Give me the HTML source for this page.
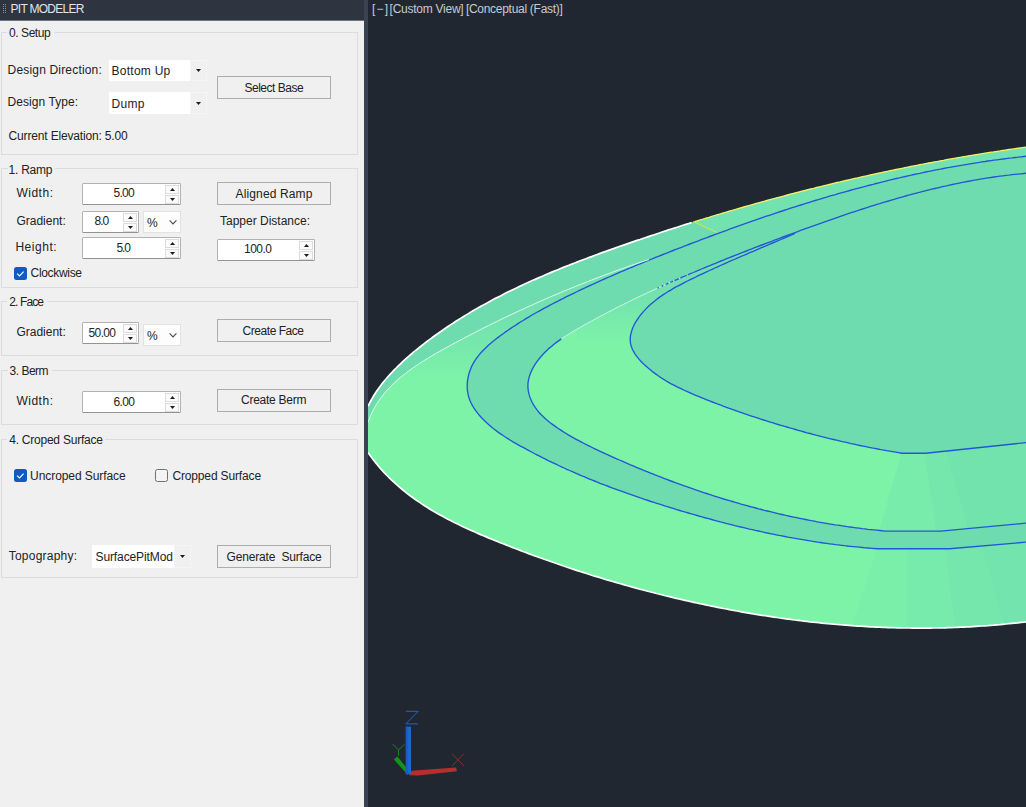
<!DOCTYPE html><html><head><meta charset="utf-8"><title>PIT MODELER</title><style>

html,body{margin:0;padding:0}
body{width:1026px;height:807px;overflow:hidden;background:#f0f0f0;position:relative;font-family:"Liberation Sans",sans-serif;font-size:12px;color:#222}
.t{position:absolute;white-space:pre;line-height:14px;height:14px;font-size:12px}
.abs{position:absolute;box-sizing:border-box}
.title{left:0;top:0;width:364px;height:21px;background:#2e3440;border-bottom:1px solid #6f737b}
.divider{left:364px;top:0;width:4px;height:807px;background:#3b4252}
.view{left:368px;top:0;width:658px;height:807px;background:#212730}
.grp{border:1px solid #dcdcdc;left:1px;width:357px}
.lbl{background:#f0f0f0}
.btn{border:1px solid #adadad;background:#f0f0f0;left:217px;width:114px}
.combo{background:#fff}
.cbtn{background:#f0f0f0;border:1px dotted #fafafa}
.spin{background:#fff;border:1px solid #b2b2b2;border-bottom-color:#929292;border-radius:1.5px}
.sbtn{background:#fafafa;border:1px solid #dcdcdc}
.pc{background:#fdfdfd;border:1px solid #e2e2e2}
.chk{width:13px;height:13px;border-radius:2.5px}

</style></head><body>
<div class="abs view"></div>
<svg width="1026" height="807" viewBox="0 0 1026 807" style="position:absolute;left:0;top:0">
<defs>
<clipPath id="vp"><rect x="368" y="0" width="658" height="807"/></clipPath>
<clipPath id="body"><path d="M368.0 406.3 L369.3 403.6 L370.7 401.0 L372.2 398.4 L373.7 395.8 L375.3 393.3 L376.9 390.8 L378.6 388.4 L380.4 386.0 L382.2 383.6 L384.1 381.3 L386.0 379.0 L387.9 376.7 L389.9 374.5 L392.0 372.3 L394.0 370.1 L396.2 368.0 L398.3 365.9 L400.5 363.8 L402.7 361.7 L404.9 359.7 L407.2 357.7 L409.5 355.7 L411.8 353.7 L414.1 351.7 L416.4 349.8 L418.8 347.9 L421.2 346.0 L423.6 344.1 L426.0 342.2 L428.4 340.4 L430.9 338.6 L433.3 336.8 L435.8 335.0 L438.3 333.2 L440.8 331.5 L443.3 329.7 L445.8 328.0 L448.3 326.3 L450.8 324.6 L453.4 323.0 L455.9 321.3 L458.4 319.7 L461.0 318.1 L463.6 316.5 L466.2 314.9 L468.7 313.4 L471.3 311.8 L473.9 310.3 L476.6 308.8 L479.2 307.3 L481.8 305.8 L484.4 304.4 L487.1 302.9 L489.7 301.5 L492.4 300.0 L495.0 298.6 L497.7 297.2 L500.4 295.9 L503.1 294.5 L505.7 293.1 L508.4 291.8 L511.1 290.5 L513.8 289.2 L516.5 287.9 L519.3 286.6 L522.0 285.3 L524.7 284.0 L527.4 282.8 L530.2 281.5 L532.9 280.3 L535.7 279.1 L538.4 277.9 L541.2 276.7 L544.0 275.5 L546.7 274.3 L549.5 273.1 L552.3 271.9 L555.1 270.8 L557.9 269.7 L560.6 268.5 L563.4 267.4 L566.2 266.3 L569.0 265.2 L571.8 264.1 L574.7 263.0 L577.5 261.9 L580.3 260.8 L583.1 259.7 L585.9 258.7 L588.7 257.6 L591.6 256.6 L594.4 255.5 L597.2 254.5 L600.1 253.4 L602.9 252.4 L605.8 251.4 L608.6 250.4 L611.4 249.4 L614.3 248.4 L617.1 247.3 L620.0 246.3 L622.8 245.4 L625.7 244.4 L628.5 243.4 L631.4 242.4 L634.2 241.4 L637.1 240.4 L640.0 239.5 L642.8 238.5 L645.7 237.5 L648.5 236.6 L651.4 235.6 L654.3 234.7 L657.1 233.7 L660.0 232.8 L662.9 231.8 L665.8 230.9 L668.6 229.9 L671.5 229.0 L674.4 228.1 L677.2 227.2 L680.1 226.2 L683.0 225.3 L685.9 224.4 L688.8 223.5 L691.6 222.6 L694.5 221.7 L697.4 220.8 L700.3 219.9 L703.2 219.0 L706.1 218.1 L709.0 217.3 L711.8 216.4 L714.7 215.5 L717.6 214.6 L720.5 213.8 L723.4 212.9 L726.3 212.1 L729.2 211.2 L732.1 210.4 L735.0 209.5 L737.9 208.7 L740.8 207.8 L743.7 207.0 L746.6 206.2 L749.5 205.4 L752.4 204.5 L755.3 203.7 L758.3 202.9 L761.2 202.1 L764.1 201.3 L767.0 200.5 L769.9 199.7 L772.8 198.9 L775.7 198.1 L778.6 197.3 L781.6 196.6 L784.5 195.8 L787.4 195.0 L790.3 194.2 L793.2 193.5 L796.2 192.7 L799.1 192.0 L802.0 191.2 L804.9 190.5 L807.9 189.7 L810.8 189.0 L813.7 188.3 L816.7 187.5 L819.6 186.8 L822.5 186.1 L825.5 185.4 L828.4 184.7 L831.3 184.0 L834.3 183.2 L837.2 182.5 L840.1 181.9 L843.1 181.2 L846.0 180.5 L849.0 179.8 L851.9 179.1 L854.8 178.4 L857.8 177.8 L860.7 177.1 L863.7 176.4 L866.6 175.8 L869.6 175.1 L872.5 174.5 L875.5 173.8 L878.4 173.2 L881.4 172.6 L884.3 171.9 L887.3 171.3 L890.2 170.7 L893.2 170.1 L896.1 169.5 L899.1 168.9 L902.0 168.3 L905.0 167.7 L908.0 167.1 L910.9 166.5 L913.9 165.9 L916.9 165.3 L919.8 164.7 L922.8 164.2 L925.7 163.6 L928.7 163.0 L931.7 162.5 L934.6 161.9 L937.6 161.4 L940.6 160.8 L943.5 160.3 L946.5 159.7 L949.5 159.2 L952.5 158.7 L955.4 158.2 L958.4 157.6 L961.4 157.1 L964.4 156.6 L967.3 156.1 L970.3 155.6 L973.3 155.1 L976.3 154.6 L979.2 154.1 L982.2 153.7 L985.2 153.2 L988.2 152.7 L991.2 152.2 L994.1 151.8 L997.1 151.3 L1000.1 150.9 L1003.1 150.4 L1006.1 150.0 L1009.1 149.5 L1012.1 149.1 L1015.0 148.7 L1018.0 148.2 L1021.0 147.8 L1024.0 147.4 L1027.0 147.0 L1027.0 621.7 L1024.0 622.1 L1021.0 622.4 L1018.0 622.8 L1014.9 623.1 L1011.9 623.4 L1008.9 623.7 L1005.9 624.0 L1002.9 624.3 L999.8 624.6 L996.8 624.8 L993.8 625.1 L990.8 625.3 L987.8 625.6 L984.8 625.8 L981.7 626.0 L978.7 626.2 L975.7 626.4 L972.7 626.6 L969.7 626.8 L966.6 626.9 L963.6 627.1 L960.6 627.2 L957.6 627.3 L954.6 627.5 L951.5 627.6 L948.5 627.7 L945.5 627.8 L942.5 627.8 L939.5 627.9 L936.4 628.0 L933.4 628.0 L930.4 628.1 L927.4 628.1 L924.4 628.1 L921.3 628.1 L918.3 628.1 L915.3 628.1 L912.3 628.1 L909.3 628.0 L906.2 628.0 L903.2 628.0 L900.2 627.9 L897.2 627.8 L894.2 627.7 L891.2 627.7 L888.2 627.6 L885.1 627.4 L882.1 627.3 L879.1 627.2 L876.1 627.1 L873.1 626.9 L870.1 626.8 L867.1 626.6 L864.0 626.4 L861.0 626.2 L858.0 626.1 L855.0 625.9 L852.0 625.6 L849.0 625.4 L846.0 625.2 L843.0 625.0 L840.0 624.7 L837.0 624.5 L834.0 624.2 L831.0 623.9 L828.0 623.6 L825.0 623.4 L821.9 623.1 L818.9 622.7 L815.9 622.4 L812.9 622.1 L809.9 621.8 L807.0 621.4 L804.0 621.1 L801.0 620.7 L798.0 620.3 L795.0 620.0 L792.0 619.6 L789.0 619.2 L786.0 618.8 L783.0 618.4 L780.0 618.0 L777.0 617.5 L774.0 617.1 L771.1 616.6 L768.1 616.2 L765.1 615.7 L762.1 615.3 L759.1 614.8 L756.1 614.3 L753.2 613.8 L750.2 613.3 L747.2 612.8 L744.2 612.3 L741.3 611.8 L738.3 611.2 L735.3 610.7 L732.3 610.1 L729.4 609.6 L726.4 609.0 L723.4 608.5 L720.5 607.9 L717.5 607.3 L714.6 606.7 L711.6 606.1 L708.6 605.5 L705.7 604.9 L702.7 604.2 L699.8 603.6 L696.8 603.0 L693.9 602.3 L690.9 601.7 L688.0 601.0 L685.0 600.3 L682.1 599.7 L679.1 599.0 L676.2 598.3 L673.3 597.6 L670.3 596.9 L667.4 596.2 L664.5 595.5 L661.5 594.7 L658.6 594.0 L655.7 593.3 L652.7 592.5 L649.8 591.8 L646.9 591.0 L644.0 590.2 L641.0 589.5 L638.1 588.7 L635.2 587.9 L632.3 587.1 L629.4 586.3 L626.5 585.5 L623.6 584.6 L620.6 583.8 L617.7 583.0 L614.8 582.1 L611.9 581.3 L609.0 580.4 L606.1 579.6 L603.2 578.7 L600.3 577.8 L597.5 576.9 L594.6 576.1 L591.7 575.2 L588.8 574.2 L585.9 573.3 L583.0 572.4 L580.1 571.5 L577.3 570.6 L574.4 569.6 L571.5 568.7 L568.6 567.7 L565.8 566.7 L562.9 565.8 L560.0 564.8 L557.2 563.8 L554.3 562.8 L551.4 561.8 L548.6 560.8 L545.7 559.8 L542.9 558.8 L540.0 557.8 L537.2 556.7 L534.3 555.7 L531.5 554.6 L528.6 553.6 L525.8 552.5 L523.0 551.5 L520.1 550.4 L517.3 549.3 L514.5 548.2 L511.6 547.1 L508.8 546.0 L506.0 544.9 L503.2 543.8 L500.3 542.7 L497.5 541.5 L494.7 540.4 L491.9 539.2 L489.1 538.1 L486.3 536.9 L483.5 535.7 L480.7 534.6 L477.9 533.4 L475.1 532.1 L472.4 530.9 L469.6 529.7 L466.9 528.4 L464.1 527.2 L461.4 525.9 L458.7 524.6 L456.0 523.2 L453.3 521.9 L450.6 520.5 L447.9 519.2 L445.2 517.8 L442.6 516.3 L440.0 514.9 L437.4 513.4 L434.8 511.9 L432.2 510.4 L429.6 508.9 L427.1 507.3 L424.6 505.7 L422.1 504.1 L419.6 502.4 L417.2 500.8 L414.7 499.1 L412.3 497.3 L409.9 495.6 L407.6 493.8 L405.2 491.9 L402.9 490.0 L400.6 488.1 L398.3 486.2 L396.1 484.2 L393.9 482.2 L391.7 480.2 L389.6 478.1 L387.5 476.0 L385.4 473.8 L383.3 471.6 L381.3 469.4 L379.3 467.1 L377.3 464.8 L375.4 462.4 L373.5 460.0 L371.6 457.5 L369.8 455.0 L368.0 452.5 Z"/></clipPath>
<linearGradient id="gu" gradientUnits="userSpaceOnUse" x1="0" y1="380" x2="0" y2="318"><stop offset="0" stop-color="#73e3ae" stop-opacity="0"/><stop offset="0.5" stop-color="#73e3ae" stop-opacity="0.6"/><stop offset="1" stop-color="#72e1af" stop-opacity="1"/></linearGradient>
<linearGradient id="gv" gradientUnits="userSpaceOnUse" x1="0" y1="345" x2="0" y2="292"><stop offset="0" stop-color="#73e3ae" stop-opacity="0"/><stop offset="1" stop-color="#72e1af" stop-opacity="1"/></linearGradient>
</defs>
<g clip-path="url(#vp)">
<path d="M368.0 406.3 L369.3 403.6 L370.7 401.0 L372.2 398.4 L373.7 395.8 L375.3 393.3 L376.9 390.8 L378.6 388.4 L380.4 386.0 L382.2 383.6 L384.1 381.3 L386.0 379.0 L387.9 376.7 L389.9 374.5 L392.0 372.3 L394.0 370.1 L396.2 368.0 L398.3 365.9 L400.5 363.8 L402.7 361.7 L404.9 359.7 L407.2 357.7 L409.5 355.7 L411.8 353.7 L414.1 351.7 L416.4 349.8 L418.8 347.9 L421.2 346.0 L423.6 344.1 L426.0 342.2 L428.4 340.4 L430.9 338.6 L433.3 336.8 L435.8 335.0 L438.3 333.2 L440.8 331.5 L443.3 329.7 L445.8 328.0 L448.3 326.3 L450.8 324.6 L453.4 323.0 L455.9 321.3 L458.4 319.7 L461.0 318.1 L463.6 316.5 L466.2 314.9 L468.7 313.4 L471.3 311.8 L473.9 310.3 L476.6 308.8 L479.2 307.3 L481.8 305.8 L484.4 304.4 L487.1 302.9 L489.7 301.5 L492.4 300.0 L495.0 298.6 L497.7 297.2 L500.4 295.9 L503.1 294.5 L505.7 293.1 L508.4 291.8 L511.1 290.5 L513.8 289.2 L516.5 287.9 L519.3 286.6 L522.0 285.3 L524.7 284.0 L527.4 282.8 L530.2 281.5 L532.9 280.3 L535.7 279.1 L538.4 277.9 L541.2 276.7 L544.0 275.5 L546.7 274.3 L549.5 273.1 L552.3 271.9 L555.1 270.8 L557.9 269.7 L560.6 268.5 L563.4 267.4 L566.2 266.3 L569.0 265.2 L571.8 264.1 L574.7 263.0 L577.5 261.9 L580.3 260.8 L583.1 259.7 L585.9 258.7 L588.7 257.6 L591.6 256.6 L594.4 255.5 L597.2 254.5 L600.1 253.4 L602.9 252.4 L605.8 251.4 L608.6 250.4 L611.4 249.4 L614.3 248.4 L617.1 247.3 L620.0 246.3 L622.8 245.4 L625.7 244.4 L628.5 243.4 L631.4 242.4 L634.2 241.4 L637.1 240.4 L640.0 239.5 L642.8 238.5 L645.7 237.5 L648.5 236.6 L651.4 235.6 L654.3 234.7 L657.1 233.7 L660.0 232.8 L662.9 231.8 L665.8 230.9 L668.6 229.9 L671.5 229.0 L674.4 228.1 L677.2 227.2 L680.1 226.2 L683.0 225.3 L685.9 224.4 L688.8 223.5 L691.6 222.6 L694.5 221.7 L697.4 220.8 L700.3 219.9 L703.2 219.0 L706.1 218.1 L709.0 217.3 L711.8 216.4 L714.7 215.5 L717.6 214.6 L720.5 213.8 L723.4 212.9 L726.3 212.1 L729.2 211.2 L732.1 210.4 L735.0 209.5 L737.9 208.7 L740.8 207.8 L743.7 207.0 L746.6 206.2 L749.5 205.4 L752.4 204.5 L755.3 203.7 L758.3 202.9 L761.2 202.1 L764.1 201.3 L767.0 200.5 L769.9 199.7 L772.8 198.9 L775.7 198.1 L778.6 197.3 L781.6 196.6 L784.5 195.8 L787.4 195.0 L790.3 194.2 L793.2 193.5 L796.2 192.7 L799.1 192.0 L802.0 191.2 L804.9 190.5 L807.9 189.7 L810.8 189.0 L813.7 188.3 L816.7 187.5 L819.6 186.8 L822.5 186.1 L825.5 185.4 L828.4 184.7 L831.3 184.0 L834.3 183.2 L837.2 182.5 L840.1 181.9 L843.1 181.2 L846.0 180.5 L849.0 179.8 L851.9 179.1 L854.8 178.4 L857.8 177.8 L860.7 177.1 L863.7 176.4 L866.6 175.8 L869.6 175.1 L872.5 174.5 L875.5 173.8 L878.4 173.2 L881.4 172.6 L884.3 171.9 L887.3 171.3 L890.2 170.7 L893.2 170.1 L896.1 169.5 L899.1 168.9 L902.0 168.3 L905.0 167.7 L908.0 167.1 L910.9 166.5 L913.9 165.9 L916.9 165.3 L919.8 164.7 L922.8 164.2 L925.7 163.6 L928.7 163.0 L931.7 162.5 L934.6 161.9 L937.6 161.4 L940.6 160.8 L943.5 160.3 L946.5 159.7 L949.5 159.2 L952.5 158.7 L955.4 158.2 L958.4 157.6 L961.4 157.1 L964.4 156.6 L967.3 156.1 L970.3 155.6 L973.3 155.1 L976.3 154.6 L979.2 154.1 L982.2 153.7 L985.2 153.2 L988.2 152.7 L991.2 152.2 L994.1 151.8 L997.1 151.3 L1000.1 150.9 L1003.1 150.4 L1006.1 150.0 L1009.1 149.5 L1012.1 149.1 L1015.0 148.7 L1018.0 148.2 L1021.0 147.8 L1024.0 147.4 L1027.0 147.0 L1027.0 621.7 L1024.0 622.1 L1021.0 622.4 L1018.0 622.8 L1014.9 623.1 L1011.9 623.4 L1008.9 623.7 L1005.9 624.0 L1002.9 624.3 L999.8 624.6 L996.8 624.8 L993.8 625.1 L990.8 625.3 L987.8 625.6 L984.8 625.8 L981.7 626.0 L978.7 626.2 L975.7 626.4 L972.7 626.6 L969.7 626.8 L966.6 626.9 L963.6 627.1 L960.6 627.2 L957.6 627.3 L954.6 627.5 L951.5 627.6 L948.5 627.7 L945.5 627.8 L942.5 627.8 L939.5 627.9 L936.4 628.0 L933.4 628.0 L930.4 628.1 L927.4 628.1 L924.4 628.1 L921.3 628.1 L918.3 628.1 L915.3 628.1 L912.3 628.1 L909.3 628.0 L906.2 628.0 L903.2 628.0 L900.2 627.9 L897.2 627.8 L894.2 627.7 L891.2 627.7 L888.2 627.6 L885.1 627.4 L882.1 627.3 L879.1 627.2 L876.1 627.1 L873.1 626.9 L870.1 626.8 L867.1 626.6 L864.0 626.4 L861.0 626.2 L858.0 626.1 L855.0 625.9 L852.0 625.6 L849.0 625.4 L846.0 625.2 L843.0 625.0 L840.0 624.7 L837.0 624.5 L834.0 624.2 L831.0 623.9 L828.0 623.6 L825.0 623.4 L821.9 623.1 L818.9 622.7 L815.9 622.4 L812.9 622.1 L809.9 621.8 L807.0 621.4 L804.0 621.1 L801.0 620.7 L798.0 620.3 L795.0 620.0 L792.0 619.6 L789.0 619.2 L786.0 618.8 L783.0 618.4 L780.0 618.0 L777.0 617.5 L774.0 617.1 L771.1 616.6 L768.1 616.2 L765.1 615.7 L762.1 615.3 L759.1 614.8 L756.1 614.3 L753.2 613.8 L750.2 613.3 L747.2 612.8 L744.2 612.3 L741.3 611.8 L738.3 611.2 L735.3 610.7 L732.3 610.1 L729.4 609.6 L726.4 609.0 L723.4 608.5 L720.5 607.9 L717.5 607.3 L714.6 606.7 L711.6 606.1 L708.6 605.5 L705.7 604.9 L702.7 604.2 L699.8 603.6 L696.8 603.0 L693.9 602.3 L690.9 601.7 L688.0 601.0 L685.0 600.3 L682.1 599.7 L679.1 599.0 L676.2 598.3 L673.3 597.6 L670.3 596.9 L667.4 596.2 L664.5 595.5 L661.5 594.7 L658.6 594.0 L655.7 593.3 L652.7 592.5 L649.8 591.8 L646.9 591.0 L644.0 590.2 L641.0 589.5 L638.1 588.7 L635.2 587.9 L632.3 587.1 L629.4 586.3 L626.5 585.5 L623.6 584.6 L620.6 583.8 L617.7 583.0 L614.8 582.1 L611.9 581.3 L609.0 580.4 L606.1 579.6 L603.2 578.7 L600.3 577.8 L597.5 576.9 L594.6 576.1 L591.7 575.2 L588.8 574.2 L585.9 573.3 L583.0 572.4 L580.1 571.5 L577.3 570.6 L574.4 569.6 L571.5 568.7 L568.6 567.7 L565.8 566.7 L562.9 565.8 L560.0 564.8 L557.2 563.8 L554.3 562.8 L551.4 561.8 L548.6 560.8 L545.7 559.8 L542.9 558.8 L540.0 557.8 L537.2 556.7 L534.3 555.7 L531.5 554.6 L528.6 553.6 L525.8 552.5 L523.0 551.5 L520.1 550.4 L517.3 549.3 L514.5 548.2 L511.6 547.1 L508.8 546.0 L506.0 544.9 L503.2 543.8 L500.3 542.7 L497.5 541.5 L494.7 540.4 L491.9 539.2 L489.1 538.1 L486.3 536.9 L483.5 535.7 L480.7 534.6 L477.9 533.4 L475.1 532.1 L472.4 530.9 L469.6 529.7 L466.9 528.4 L464.1 527.2 L461.4 525.9 L458.7 524.6 L456.0 523.2 L453.3 521.9 L450.6 520.5 L447.9 519.2 L445.2 517.8 L442.6 516.3 L440.0 514.9 L437.4 513.4 L434.8 511.9 L432.2 510.4 L429.6 508.9 L427.1 507.3 L424.6 505.7 L422.1 504.1 L419.6 502.4 L417.2 500.8 L414.7 499.1 L412.3 497.3 L409.9 495.6 L407.6 493.8 L405.2 491.9 L402.9 490.0 L400.6 488.1 L398.3 486.2 L396.1 484.2 L393.9 482.2 L391.7 480.2 L389.6 478.1 L387.5 476.0 L385.4 473.8 L383.3 471.6 L381.3 469.4 L379.3 467.1 L377.3 464.8 L375.4 462.4 L373.5 460.0 L371.6 457.5 L369.8 455.0 L368.0 452.5 Z" fill="#7df3a8"/>
<g clip-path="url(#body)">
<path d="M905.3 440 L922.0 440 L936.8 536 L877.6 536 Z" fill="#78ecab"/>
<path d="M922.0 440 L942.3 440 L969.4 536 L936.8 536 Z" fill="#75e7ad"/>
<path d="M942.3 440 L1030 440 L1030 536 L969.4 536 Z" fill="#73e3ae"/>
<path d="M880.4 538 L907.0 538 L907.0 632 L850.4 632 Z" fill="#7aefaa"/>
<path d="M907.0 538 L943.2 538 L955.2 632 L907.0 632 Z" fill="#77ebab"/>
<path d="M943.2 538 L978.9 538 L1005.9 632 L955.2 632 Z" fill="#75e7ad"/>
<path d="M978.9 538 L1030 538 L1030 632 L1005.9 632 Z" fill="#73e4ae"/>
</g>
<path d="M368.0 422.5 L369.0 419.5 L370.2 416.6 L371.4 413.8 L372.7 411.0 L374.1 408.4 L375.6 405.7 L377.2 403.2 L378.8 400.7 L380.5 398.2 L382.3 395.9 L384.2 393.6 L386.1 391.3 L388.1 389.1 L390.2 386.9 L392.3 384.8 L394.5 382.7 L396.7 380.7 L398.9 378.7 L401.2 376.8 L403.6 374.9 L406.0 373.1 L408.4 371.2 L410.8 369.4 L413.3 367.7 L415.8 365.9 L418.4 364.2 L420.9 362.6 L423.5 360.9 L426.1 359.3 L428.7 357.7 L431.4 356.1 L434.0 354.5 L436.7 353.0 L439.4 351.5 L442.1 350.0 L444.8 348.5 L447.5 347.0 L450.2 345.5 L452.9 344.0 L455.6 342.6 L458.4 341.1 L461.1 339.7 L463.8 338.2 L466.5 336.8 L469.3 335.4 L472.0 334.0 L474.7 332.6 L477.4 331.2 L480.2 329.8 L482.9 328.4 L485.6 327.0 L488.4 325.7 L491.1 324.3 L493.9 323.0 L496.6 321.6 L499.3 320.3 L502.1 318.9 L504.8 317.6 L507.6 316.3 L510.3 315.0 L513.1 313.7 L515.9 312.4 L518.6 311.1 L521.4 309.8 L524.2 308.6 L526.9 307.3 L529.7 306.0 L532.5 304.8 L535.2 303.5 L538.0 302.3 L540.8 301.1 L543.6 299.9 L546.4 298.6 L549.2 297.4 L552.0 296.2 L554.8 295.0 L557.6 293.9 L560.4 292.7 L563.2 291.5 L566.0 290.3 L568.8 289.2 L571.6 288.0 L574.4 286.9 L577.2 285.7 L580.1 284.6 L582.9 283.5 L585.7 282.4 L588.6 281.3 L591.4 280.2 L594.2 279.1 L597.1 278.0 L599.9 276.9 L602.8 275.8 L605.6 274.7 L608.5 273.7 L611.4 272.6 L614.2 271.6 L617.1 270.5 L620.0 269.5 L622.9 268.5 L625.8 267.4 L628.7 266.4 L631.5 265.4 L634.4 264.4 L637.3 263.4 L640.3 262.4 L643.2 261.4 L646.1 260.5 L649.0 259.5 L650.6 259.5 L647.8 260.6 L645.1 261.7 L642.3 262.9 L639.5 264.0 L636.7 265.2 L633.9 266.4 L631.1 267.5 L628.4 268.7 L625.6 269.9 L622.8 271.0 L620.0 272.2 L617.3 273.4 L614.5 274.6 L611.8 275.8 L609.0 277.0 L606.3 278.2 L603.5 279.4 L600.8 280.7 L598.0 281.9 L595.3 283.1 L592.6 284.4 L589.8 285.6 L587.1 286.9 L584.4 288.2 L581.7 289.4 L579.0 290.7 L576.3 292.0 L573.6 293.3 L570.9 294.6 L568.2 295.9 L565.5 297.2 L562.9 298.6 L560.2 299.9 L557.5 301.3 L554.9 302.6 L552.2 304.0 L549.6 305.4 L546.9 306.8 L544.3 308.2 L541.7 309.6 L539.1 311.1 L536.4 312.5 L533.8 314.0 L531.2 315.5 L528.6 317.1 L526.0 318.6 L523.5 320.2 L520.9 321.8 L518.3 323.4 L515.8 325.1 L513.2 326.7 L510.7 328.4 L508.1 330.2 L505.6 331.9 L503.1 333.7 L500.6 335.5 L498.1 337.4 L495.6 339.3 L493.1 341.2 L490.8 343.2 L488.4 345.3 L486.2 347.4 L484.0 349.5 L481.9 351.7 L479.9 353.9 L478.0 356.3 L476.2 358.7 L474.6 361.1 L473.1 363.7 L471.7 366.3 L470.6 369.0 L469.6 371.8 L468.7 374.6 L468.1 377.5 L467.6 380.4 L467.3 383.3 L467.2 386.2 L368 440 Z" fill="url(#gu)"/>
<path d="M368.0 406.3 L369.3 403.6 L370.7 401.0 L372.2 398.4 L373.7 395.8 L375.3 393.3 L376.9 390.8 L378.6 388.4 L380.4 386.0 L382.2 383.6 L384.1 381.3 L386.0 379.0 L387.9 376.7 L389.9 374.5 L392.0 372.3 L394.0 370.1 L396.2 368.0 L398.3 365.9 L400.5 363.8 L402.7 361.7 L404.9 359.7 L407.2 357.7 L409.5 355.7 L411.8 353.7 L414.1 351.7 L416.4 349.8 L418.8 347.9 L421.2 346.0 L423.6 344.1 L426.0 342.2 L428.4 340.4 L430.9 338.6 L433.3 336.8 L435.8 335.0 L438.3 333.2 L440.8 331.5 L443.3 329.7 L445.8 328.0 L448.3 326.3 L450.8 324.6 L453.4 323.0 L455.9 321.3 L458.4 319.7 L461.0 318.1 L463.6 316.5 L466.2 314.9 L468.7 313.4 L471.3 311.8 L473.9 310.3 L476.6 308.8 L479.2 307.3 L481.8 305.8 L484.4 304.4 L487.1 302.9 L489.7 301.5 L492.4 300.0 L495.0 298.6 L497.7 297.2 L500.4 295.9 L503.1 294.5 L505.7 293.1 L508.4 291.8 L511.1 290.5 L513.8 289.2 L516.5 287.9 L519.3 286.6 L522.0 285.3 L524.7 284.0 L527.4 282.8 L530.2 281.5 L532.9 280.3 L535.7 279.1 L538.4 277.9 L541.2 276.7 L544.0 275.5 L546.7 274.3 L549.5 273.1 L552.3 271.9 L555.1 270.8 L557.9 269.7 L560.6 268.5 L563.4 267.4 L566.2 266.3 L569.0 265.2 L571.8 264.1 L574.7 263.0 L577.5 261.9 L580.3 260.8 L583.1 259.7 L585.9 258.7 L588.7 257.6 L591.6 256.6 L594.4 255.5 L597.2 254.5 L600.1 253.4 L602.9 252.4 L605.8 251.4 L608.6 250.4 L611.4 249.4 L614.3 248.4 L617.1 247.3 L620.0 246.3 L622.8 245.4 L625.7 244.4 L628.5 243.4 L631.4 242.4 L634.2 241.4 L637.1 240.4 L640.0 239.5 L642.8 238.5 L645.7 237.5 L648.5 236.6 L651.4 235.6 L649.0 259.5 L646.1 260.5 L643.2 261.4 L640.3 262.4 L637.3 263.4 L634.4 264.4 L631.5 265.4 L628.7 266.4 L625.8 267.4 L622.9 268.5 L620.0 269.5 L617.1 270.5 L614.2 271.6 L611.4 272.6 L608.5 273.7 L605.6 274.7 L602.8 275.8 L599.9 276.9 L597.1 278.0 L594.2 279.1 L591.4 280.2 L588.6 281.3 L585.7 282.4 L582.9 283.5 L580.1 284.6 L577.2 285.7 L574.4 286.9 L571.6 288.0 L568.8 289.2 L566.0 290.3 L563.2 291.5 L560.4 292.7 L557.6 293.9 L554.8 295.0 L552.0 296.2 L549.2 297.4 L546.4 298.6 L543.6 299.9 L540.8 301.1 L538.0 302.3 L535.2 303.5 L532.5 304.8 L529.7 306.0 L526.9 307.3 L524.2 308.6 L521.4 309.8 L518.6 311.1 L515.9 312.4 L513.1 313.7 L510.3 315.0 L507.6 316.3 L504.8 317.6 L502.1 318.9 L499.3 320.3 L496.6 321.6 L493.9 323.0 L491.1 324.3 L488.4 325.7 L485.6 327.0 L482.9 328.4 L480.2 329.8 L477.4 331.2 L474.7 332.6 L472.0 334.0 L469.3 335.4 L466.5 336.8 L463.8 338.2 L461.1 339.7 L458.4 341.1 L455.6 342.6 L452.9 344.0 L450.2 345.5 L447.5 347.0 L444.8 348.5 L442.1 350.0 L439.4 351.5 L436.7 353.0 L434.0 354.5 L431.4 356.1 L428.7 357.7 L426.1 359.3 L423.5 360.9 L420.9 362.6 L418.4 364.2 L415.8 365.9 L413.3 367.7 L410.8 369.4 L408.4 371.2 L406.0 373.1 L403.6 374.9 L401.2 376.8 L398.9 378.7 L396.7 380.7 L394.5 382.7 L392.3 384.8 L390.2 386.9 L388.1 389.1 L386.1 391.3 L384.2 393.6 L382.3 395.9 L380.5 398.2 L378.8 400.7 L377.2 403.2 L375.6 405.7 L374.1 408.4 L372.7 411.0 L371.4 413.8 L370.2 416.6 L369.0 419.5 L368.0 422.5 Z" fill="#6fdcb0"/>
<path d="M645.7 237.5 L648.5 236.6 L651.4 235.6 L654.3 234.7 L657.1 233.7 L660.0 232.8 L662.9 231.8 L665.8 230.9 L668.6 229.9 L671.5 229.0 L674.4 228.1 L677.2 227.2 L680.1 226.2 L683.0 225.3 L685.9 224.4 L688.8 223.5 L691.6 222.6 L694.5 221.7 L697.4 220.8 L700.3 219.9 L703.2 219.0 L706.1 218.1 L709.0 217.3 L711.8 216.4 L714.7 215.5 L717.6 214.6 L720.5 213.8 L723.4 212.9 L726.3 212.1 L729.2 211.2 L732.1 210.4 L735.0 209.5 L737.9 208.7 L740.8 207.8 L743.7 207.0 L746.6 206.2 L749.5 205.4 L752.4 204.5 L755.3 203.7 L758.3 202.9 L761.2 202.1 L764.1 201.3 L767.0 200.5 L769.9 199.7 L772.8 198.9 L775.7 198.1 L778.6 197.3 L781.6 196.6 L784.5 195.8 L787.4 195.0 L790.3 194.2 L793.2 193.5 L796.2 192.7 L799.1 192.0 L802.0 191.2 L804.9 190.5 L807.9 189.7 L810.8 189.0 L813.7 188.3 L816.7 187.5 L819.6 186.8 L822.5 186.1 L825.5 185.4 L828.4 184.7 L831.3 184.0 L834.3 183.2 L837.2 182.5 L840.1 181.9 L843.1 181.2 L846.0 180.5 L849.0 179.8 L851.9 179.1 L854.8 178.4 L857.8 177.8 L860.7 177.1 L863.7 176.4 L866.6 175.8 L869.6 175.1 L872.5 174.5 L875.5 173.8 L878.4 173.2 L881.4 172.6 L884.3 171.9 L887.3 171.3 L890.2 170.7 L893.2 170.1 L896.1 169.5 L899.1 168.9 L902.0 168.3 L905.0 167.7 L908.0 167.1 L910.9 166.5 L913.9 165.9 L916.9 165.3 L919.8 164.7 L922.8 164.2 L925.7 163.6 L928.7 163.0 L931.7 162.5 L934.6 161.9 L937.6 161.4 L940.6 160.8 L943.5 160.3 L946.5 159.7 L949.5 159.2 L952.5 158.7 L955.4 158.2 L958.4 157.6 L961.4 157.1 L964.4 156.6 L967.3 156.1 L970.3 155.6 L973.3 155.1 L976.3 154.6 L979.2 154.1 L982.2 153.7 L985.2 153.2 L988.2 152.7 L991.2 152.2 L994.1 151.8 L997.1 151.3 L1000.1 150.9 L1003.1 150.4 L1006.1 150.0 L1009.1 149.5 L1012.1 149.1 L1015.0 148.7 L1018.0 148.2 L1021.0 147.8 L1024.0 147.4 L1027.0 147.0 L1027.0 156.2 L1024.0 156.5 L1021.0 156.8 L1018.0 157.2 L1015.0 157.5 L1012.0 157.9 L1009.0 158.2 L1006.0 158.6 L1003.0 159.0 L1000.0 159.4 L997.0 159.8 L994.0 160.2 L991.0 160.6 L988.0 161.0 L985.0 161.5 L982.0 161.9 L979.1 162.4 L976.1 162.8 L973.1 163.3 L970.1 163.8 L967.2 164.3 L964.2 164.8 L961.2 165.3 L958.3 165.8 L955.3 166.3 L952.3 166.8 L949.4 167.4 L946.4 167.9 L943.5 168.5 L940.5 169.1 L937.6 169.6 L934.6 170.2 L931.7 170.8 L928.7 171.4 L925.8 172.0 L922.8 172.6 L919.9 173.3 L916.9 173.9 L914.0 174.5 L911.1 175.2 L908.1 175.8 L905.2 176.5 L902.3 177.2 L899.3 177.9 L896.4 178.5 L893.5 179.2 L890.6 179.9 L887.6 180.6 L884.7 181.4 L881.8 182.1 L878.9 182.8 L876.0 183.5 L873.1 184.3 L870.2 185.0 L867.2 185.8 L864.3 186.6 L861.4 187.3 L858.5 188.1 L855.6 188.9 L852.7 189.7 L849.8 190.5 L846.9 191.3 L844.0 192.1 L841.1 192.9 L838.3 193.7 L835.4 194.6 L832.5 195.4 L829.6 196.2 L826.7 197.1 L823.8 197.9 L820.9 198.8 L818.1 199.7 L815.2 200.5 L812.3 201.4 L809.4 202.3 L806.5 203.2 L803.7 204.1 L800.8 205.0 L797.9 205.9 L795.1 206.8 L792.2 207.7 L789.3 208.7 L786.5 209.6 L783.6 210.5 L780.7 211.5 L777.9 212.4 L775.0 213.4 L772.2 214.3 L769.3 215.3 L766.5 216.2 L763.6 217.2 L760.8 218.2 L757.9 219.2 L755.1 220.2 L752.2 221.1 L749.4 222.1 L746.5 223.1 L743.7 224.1 L740.9 225.1 L738.0 226.2 L735.2 227.2 L732.3 228.2 L729.5 229.2 L726.7 230.3 L723.8 231.3 L721.0 232.3 L718.2 233.4 L715.3 234.4 L712.5 235.5 L709.7 236.5 L706.9 237.6 L704.0 238.6 L701.2 239.7 L698.4 240.8 L695.6 241.8 L692.8 242.9 L689.9 244.0 L687.1 245.1 L684.3 246.2 L681.5 247.3 L678.7 248.3 L675.9 249.4 L673.1 250.5 L670.3 251.6 L667.4 252.8 L664.6 253.9 L661.8 255.0 L659.0 256.1 L656.2 257.2 L653.4 258.3 L650.6 259.5 L647.8 260.6 L645.1 261.7 Z" fill="#6fdcb0"/>
<path d="M694.5 221.7 L697.4 220.8 L700.3 219.9 L703.2 219.0 L706.1 218.1 L709.0 217.3 L711.8 216.4 L714.7 215.5 L717.6 214.6 L720.5 213.8 L723.4 212.9 L726.3 212.1 L729.2 211.2 L732.1 210.4 L735.0 209.5 L737.9 208.7 L740.8 207.8 L743.7 207.0 L746.6 206.2 L749.5 205.4 L752.4 204.5 L755.3 203.7 L758.3 202.9 L761.2 202.1 L764.1 201.3 L767.0 200.5 L769.9 199.7 L772.8 198.9 L775.7 198.1 L778.6 197.3 L781.6 196.6 L784.5 195.8 L787.4 195.0 L790.3 194.2 L793.2 193.5 L796.2 192.7 L799.1 192.0 L802.0 191.2 L804.9 190.5 L807.9 189.7 L810.8 189.0 L813.7 188.3 L816.7 187.5 L819.6 186.8 L822.5 186.1 L825.5 185.4 L828.4 184.7 L831.3 184.0 L834.3 183.2 L837.2 182.5 L840.1 181.9 L843.1 181.2 L846.0 180.5 L849.0 179.8 L851.9 179.1 L854.8 178.4 L857.8 177.8 L860.7 177.1 L863.7 176.4 L866.6 175.8 L869.6 175.1 L872.5 174.5 L875.5 173.8 L878.4 173.2 L881.4 172.6 L884.3 171.9 L887.3 171.3 L890.2 170.7 L893.2 170.1 L896.1 169.5 L899.1 168.9 L902.0 168.3 L905.0 167.7 L908.0 167.1 L910.9 166.5 L913.9 165.9 L916.9 165.3 L919.8 164.7 L922.8 164.2 L925.7 163.6 L928.7 163.0 L931.7 162.5 L934.6 161.9 L937.6 161.4 L940.6 160.8 L943.5 160.3 L946.5 159.7 L949.5 159.2 L952.5 158.7 L955.4 158.2 L958.4 157.6 L961.4 157.1 L964.4 156.6 L967.3 156.1 L970.3 155.6 L973.3 155.1 L976.3 154.6 L979.2 154.1 L982.2 153.7 L985.2 153.2 L988.2 152.7 L991.2 152.2 L994.1 151.8 L997.1 151.3 L1000.1 150.9 L1003.1 150.4 L1006.1 150.0 L1009.1 149.5 L1012.1 149.1 L1015.0 148.7 L1018.0 148.2 L1021.0 147.8 L1024.0 147.4 L1027.0 147.0 L1027.0 156.2 L1024.0 156.5 L1021.0 156.8 L1018.0 157.2 L1015.0 157.5 L1012.0 157.9 L1009.0 158.2 L1006.0 158.6 L1003.0 159.0 L1000.0 159.4 L997.0 159.8 L994.0 160.2 L991.0 160.6 L988.0 161.0 L985.0 161.5 L982.0 161.9 L979.1 162.4 L976.1 162.8 L973.1 163.3 L970.1 163.8 L967.2 164.3 L964.2 164.8 L961.2 165.3 L958.3 165.8 L955.3 166.3 L952.3 166.8 L949.4 167.4 L946.4 167.9 L943.5 168.5 L940.5 169.1 L937.6 169.6 L934.6 170.2 L931.7 170.8 L928.7 171.4 L925.8 172.0 L922.8 172.6 L919.9 173.3 L916.9 173.9 L914.0 174.5 L911.1 175.2 L908.1 175.8 L905.2 176.5 L902.3 177.2 L899.3 177.9 L896.4 178.5 L893.5 179.2 L890.6 179.9 L887.6 180.6 L884.7 181.4 L881.8 182.1 L878.9 182.8 L876.0 183.5 L873.1 184.3 L870.2 185.0 L867.2 185.8 L864.3 186.6 L861.4 187.3 L858.5 188.1 L855.6 188.9 L852.7 189.7 L849.8 190.5 L846.9 191.3 L844.0 192.1 L841.1 192.9 L838.3 193.7 L835.4 194.6 L832.5 195.4 L829.6 196.2 L826.7 197.1 L823.8 197.9 L820.9 198.8 L818.1 199.7 L815.2 200.5 L812.3 201.4 L809.4 202.3 L806.5 203.2 L803.7 204.1 L800.8 205.0 L797.9 205.9 L795.1 206.8 L792.2 207.7 L789.3 208.7 L786.5 209.6 L783.6 210.5 L780.7 211.5 L777.9 212.4 L775.0 213.4 L772.2 214.3 L769.3 215.3 L766.5 216.2 L763.6 217.2 L760.8 218.2 L757.9 219.2 L755.1 220.2 L752.2 221.1 L749.4 222.1 L746.5 223.1 L743.7 224.1 L740.9 225.1 L738.0 226.2 L735.2 227.2 L732.3 228.2 L729.5 229.2 L726.7 230.3 L723.8 231.3 L721.0 232.3 L718.2 233.4 Z" fill="#73e2b1"/>
<path d="M1027.0 156.2 L1024.0 156.5 L1021.0 156.8 L1018.0 157.2 L1015.0 157.5 L1012.0 157.9 L1009.0 158.2 L1006.0 158.6 L1003.0 159.0 L1000.0 159.4 L997.0 159.8 L994.0 160.2 L991.0 160.6 L988.0 161.0 L985.0 161.5 L982.0 161.9 L979.1 162.4 L976.1 162.8 L973.1 163.3 L970.1 163.8 L967.2 164.3 L964.2 164.8 L961.2 165.3 L958.3 165.8 L955.3 166.3 L952.3 166.8 L949.4 167.4 L946.4 167.9 L943.5 168.5 L940.5 169.1 L937.6 169.6 L934.6 170.2 L931.7 170.8 L928.7 171.4 L925.8 172.0 L922.8 172.6 L919.9 173.3 L916.9 173.9 L914.0 174.5 L911.1 175.2 L908.1 175.8 L905.2 176.5 L902.3 177.2 L899.3 177.9 L896.4 178.5 L893.5 179.2 L890.6 179.9 L887.6 180.6 L884.7 181.4 L881.8 182.1 L878.9 182.8 L876.0 183.5 L873.1 184.3 L870.2 185.0 L867.2 185.8 L864.3 186.6 L861.4 187.3 L858.5 188.1 L855.6 188.9 L852.7 189.7 L849.8 190.5 L846.9 191.3 L844.0 192.1 L841.1 192.9 L838.3 193.7 L835.4 194.6 L832.5 195.4 L829.6 196.2 L826.7 197.1 L823.8 197.9 L820.9 198.8 L818.1 199.7 L815.2 200.5 L812.3 201.4 L809.4 202.3 L806.5 203.2 L803.7 204.1 L800.8 205.0 L797.9 205.9 L795.1 206.8 L792.2 207.7 L789.3 208.7 L786.5 209.6 L783.6 210.5 L780.7 211.5 L777.9 212.4 L775.0 213.4 L772.2 214.3 L769.3 215.3 L766.5 216.2 L763.6 217.2 L760.8 218.2 L757.9 219.2 L755.1 220.2 L752.2 221.1 L749.4 222.1 L746.5 223.1 L743.7 224.1 L740.9 225.1 L738.0 226.2 L735.2 227.2 L732.3 228.2 L729.5 229.2 L726.7 230.3 L723.8 231.3 L721.0 232.3 L718.2 233.4 L715.3 234.4 L712.5 235.5 L709.7 236.5 L706.9 237.6 L704.0 238.6 L701.2 239.7 L698.4 240.8 L695.6 241.8 L692.8 242.9 L689.9 244.0 L687.1 245.1 L684.3 246.2 L681.5 247.3 L678.7 248.3 L675.9 249.4 L673.1 250.5 L670.3 251.6 L667.4 252.8 L664.6 253.9 L661.8 255.0 L659.0 256.1 L656.2 257.2 L653.4 258.3 L650.6 259.5 L647.8 260.6 L645.1 261.7 L642.3 262.9 L639.5 264.0 L636.7 265.2 L633.9 266.4 L631.1 267.5 L628.4 268.7 L625.6 269.9 L622.8 271.0 L620.0 272.2 L617.3 273.4 L614.5 274.6 L611.8 275.8 L609.0 277.0 L606.3 278.2 L603.5 279.4 L600.8 280.7 L598.0 281.9 L595.3 283.1 L592.6 284.4 L589.8 285.6 L587.1 286.9 L584.4 288.2 L581.7 289.4 L579.0 290.7 L576.3 292.0 L573.6 293.3 L570.9 294.6 L568.2 295.9 L565.5 297.2 L562.9 298.6 L560.2 299.9 L557.5 301.3 L554.9 302.6 L552.2 304.0 L549.6 305.4 L546.9 306.8 L544.3 308.2 L541.7 309.6 L539.1 311.1 L536.4 312.5 L533.8 314.0 L531.2 315.5 L528.6 317.1 L526.0 318.6 L523.5 320.2 L520.9 321.8 L518.3 323.4 L515.8 325.1 L513.2 326.7 L510.7 328.4 L508.1 330.2 L505.6 331.9 L503.1 333.7 L500.6 335.5 L498.1 337.4 L495.6 339.3 L493.1 341.2 L490.8 343.2 L488.4 345.3 L486.2 347.4 L484.0 349.5 L481.9 351.7 L479.9 353.9 L478.0 356.3 L476.2 358.7 L474.6 361.1 L473.1 363.7 L471.7 366.3 L470.6 369.0 L469.6 371.8 L468.7 374.6 L468.1 377.5 L467.6 380.4 L467.3 383.3 L467.2 386.2 L467.3 389.2 L467.7 392.1 L468.2 394.9 L469.0 397.8 L470.0 400.5 L471.2 403.3 L472.6 405.9 L474.2 408.5 L475.9 410.9 L477.8 413.4 L479.8 415.7 L481.8 418.0 L483.9 420.1 L486.1 422.3 L488.3 424.3 L490.6 426.3 L492.9 428.2 L495.3 430.0 L497.7 431.9 L500.2 433.6 L502.7 435.3 L505.2 437.0 L507.8 438.6 L510.4 440.2 L513.0 441.8 L515.6 443.3 L518.2 444.8 L520.9 446.3 L523.6 447.7 L526.2 449.2 L528.9 450.6 L531.6 452.0 L534.2 453.5 L536.9 454.8 L539.6 456.2 L542.3 457.6 L545.0 458.9 L547.7 460.3 L550.4 461.6 L553.2 462.9 L555.9 464.2 L558.6 465.5 L561.4 466.8 L564.1 468.0 L566.8 469.3 L569.6 470.5 L572.3 471.7 L575.1 472.9 L577.8 474.1 L580.6 475.3 L583.4 476.5 L586.2 477.6 L588.9 478.8 L591.7 479.9 L594.5 481.0 L597.3 482.1 L600.1 483.3 L602.9 484.3 L605.7 485.4 L608.5 486.5 L611.3 487.6 L614.1 488.6 L616.9 489.7 L619.8 490.7 L622.6 491.7 L625.4 492.7 L628.2 493.7 L631.1 494.7 L633.9 495.7 L636.8 496.7 L639.6 497.7 L642.4 498.6 L645.3 499.6 L648.1 500.5 L651.0 501.5 L653.9 502.4 L656.7 503.3 L659.6 504.2 L662.5 505.2 L665.3 506.1 L668.2 506.9 L671.1 507.8 L673.9 508.7 L676.8 509.6 L679.7 510.5 L682.6 511.3 L685.5 512.2 L688.4 513.0 L691.3 513.9 L694.2 514.7 L697.1 515.5 L700.0 516.3 L702.9 517.1 L705.8 518.0 L708.7 518.7 L711.6 519.5 L714.5 520.3 L717.4 521.1 L720.3 521.9 L723.2 522.6 L726.1 523.4 L729.1 524.1 L732.0 524.8 L734.9 525.6 L737.8 526.3 L740.8 527.0 L743.7 527.7 L746.6 528.4 L749.5 529.1 L752.5 529.7 L755.4 530.4 L758.4 531.0 L761.3 531.7 L764.2 532.3 L767.2 533.0 L770.1 533.6 L773.1 534.2 L776.0 534.8 L779.0 535.4 L781.9 535.9 L784.9 536.5 L787.9 537.1 L790.8 537.6 L793.8 538.2 L796.7 538.7 L799.7 539.2 L802.7 539.7 L805.6 540.2 L808.6 540.7 L811.6 541.2 L814.5 541.6 L817.5 542.1 L820.5 542.5 L823.5 543.0 L826.5 543.4 L829.4 543.8 L832.4 544.2 L835.4 544.6 L838.4 544.9 L841.4 545.3 L844.4 545.7 L847.3 546.0 L850.3 546.3 L853.3 546.6 L856.3 546.9 L859.3 547.2 L862.3 547.5 L865.3 547.8 L868.3 548.0 L871.3 548.3 L874.3 548.5 L877.3 548.7 L949.6 548.7 L1027.0 542.1 L1027.0 523.1 L940.9 531.1 L886.0 531.1 L883.0 530.8 L880.0 530.5 L877.0 530.2 L874.0 529.9 L871.0 529.6 L868.0 529.3 L865.0 528.9 L862.0 528.6 L859.0 528.2 L856.0 527.8 L853.0 527.4 L850.0 527.0 L847.1 526.6 L844.1 526.1 L841.1 525.7 L838.1 525.2 L835.1 524.8 L832.2 524.3 L829.2 523.8 L826.2 523.3 L823.3 522.8 L820.3 522.3 L817.3 521.8 L814.4 521.2 L811.4 520.7 L808.5 520.1 L805.5 519.5 L802.6 518.9 L799.6 518.3 L796.7 517.7 L793.7 517.1 L790.8 516.5 L787.8 515.8 L784.9 515.2 L782.0 514.5 L779.0 513.8 L776.1 513.1 L773.2 512.4 L770.3 511.7 L767.3 511.0 L764.4 510.3 L761.5 509.5 L758.6 508.8 L755.7 508.0 L752.8 507.2 L749.8 506.5 L746.9 505.7 L744.0 504.9 L741.1 504.1 L738.2 503.2 L735.4 502.4 L732.5 501.5 L729.6 500.7 L726.7 499.8 L723.8 499.0 L720.9 498.1 L718.0 497.2 L715.2 496.3 L712.3 495.4 L709.4 494.4 L706.6 493.5 L703.7 492.6 L700.8 491.6 L698.0 490.6 L695.1 489.7 L692.3 488.7 L689.4 487.7 L686.6 486.7 L683.7 485.7 L680.9 484.6 L678.1 483.6 L675.2 482.6 L672.4 481.5 L669.6 480.5 L666.8 479.4 L663.9 478.3 L661.1 477.2 L658.3 476.2 L655.5 475.0 L652.7 473.9 L649.9 472.8 L647.1 471.7 L644.3 470.6 L641.5 469.4 L638.8 468.3 L636.0 467.1 L633.2 465.9 L630.4 464.8 L627.7 463.6 L624.9 462.4 L622.2 461.2 L619.4 460.0 L616.7 458.8 L613.9 457.6 L611.2 456.3 L608.5 455.1 L605.7 453.9 L603.0 452.6 L600.3 451.4 L597.6 450.1 L594.9 448.8 L592.2 447.5 L589.5 446.2 L586.8 444.9 L584.2 443.5 L581.5 442.1 L578.8 440.7 L576.2 439.3 L573.5 437.8 L570.9 436.3 L568.3 434.8 L565.7 433.2 L563.1 431.6 L560.5 429.9 L557.9 428.2 L555.3 426.4 L552.8 424.6 L550.2 422.7 L547.8 420.8 L545.4 418.7 L543.1 416.6 L540.9 414.5 L538.9 412.2 L537.0 409.8 L535.2 407.4 L533.6 404.9 L532.1 402.3 L530.9 399.6 L529.8 396.9 L529.0 394.2 L528.4 391.5 L528.0 388.7 L527.9 385.9 L528.0 383.1 L528.4 380.3 L529.0 377.6 L529.9 374.8 L531.0 372.1 L532.2 369.4 L533.6 366.8 L535.2 364.2 L537.0 361.7 L538.8 359.2 L540.8 356.8 L542.8 354.5 L544.9 352.3 L547.1 350.2 L549.3 348.1 L551.7 346.2 L554.0 344.2 L556.4 342.4 L558.9 340.6 L561.4 338.9 L563.9 337.2 L566.5 335.5 L569.1 333.9 L571.7 332.3 L574.3 330.8 L576.9 329.2 L579.6 327.7 L582.2 326.2 L584.9 324.7 L587.5 323.2 L590.2 321.8 L592.9 320.3 L595.5 318.9 L598.2 317.4 L600.9 316.0 L603.5 314.6 L606.2 313.2 L608.9 311.8 L611.6 310.4 L614.2 309.0 L616.9 307.6 L619.6 306.3 L622.3 304.9 L625.0 303.6 L627.7 302.3 L630.4 301.0 L633.1 299.6 L635.8 298.3 L638.5 297.0 L641.2 295.7 L643.9 294.5 L646.6 293.2 L649.4 291.9 L652.1 290.7 L654.8 289.4 L657.5 288.2 L660.3 286.9 L663.0 285.7 L665.7 284.5 L668.5 283.2 L671.2 282.0 L674.0 280.8 L676.7 279.6 L679.5 278.4 L682.2 277.2 L685.0 276.0 L687.7 274.9 L690.5 273.7 L693.3 272.5 L696.0 271.3 L698.8 270.2 L701.6 269.0 L704.3 267.9 L707.1 266.7 L709.9 265.6 L712.7 264.4 L715.5 263.3 L718.3 262.1 L721.1 261.0 L723.9 259.9 L726.7 258.7 L729.5 257.6 L732.3 256.5 L735.1 255.4 L737.9 254.3 L740.7 253.2 L743.5 252.1 L746.3 251.0 L749.1 249.9 L751.9 248.8 L754.7 247.7 L757.6 246.6 L760.4 245.5 L763.2 244.5 L766.0 243.4 L768.8 242.3 L771.7 241.3 L774.5 240.2 L777.3 239.1 L780.1 238.1 L783.0 237.0 L785.8 236.0 L788.6 234.9 L791.5 233.9 L794.3 232.8 L797.1 231.8 L800.0 230.7 L802.8 229.7 L805.6 228.7 L808.5 227.6 L811.3 226.6 L814.1 225.6 L817.0 224.6 L819.8 223.6 L822.7 222.6 L825.5 221.6 L828.3 220.6 L831.2 219.6 L834.0 218.6 L836.9 217.6 L839.7 216.6 L842.6 215.6 L845.4 214.7 L848.3 213.7 L851.1 212.7 L854.0 211.8 L856.9 210.9 L859.7 209.9 L862.6 209.0 L865.4 208.1 L868.3 207.2 L871.2 206.2 L874.0 205.3 L876.9 204.4 L879.8 203.6 L882.7 202.7 L885.5 201.8 L888.4 201.0 L891.3 200.1 L894.2 199.3 L897.1 198.4 L899.9 197.6 L902.8 196.8 L905.7 196.0 L908.6 195.2 L911.5 194.4 L914.4 193.6 L917.3 192.8 L920.2 192.1 L923.1 191.3 L926.0 190.6 L929.0 189.9 L931.9 189.2 L934.8 188.5 L937.7 187.8 L940.6 187.1 L943.6 186.4 L946.5 185.8 L949.4 185.1 L952.4 184.5 L955.3 183.9 L958.3 183.3 L961.2 182.7 L964.2 182.1 L967.1 181.5 L970.1 181.0 L973.0 180.4 L976.0 179.9 L979.0 179.4 L981.9 178.9 L984.9 178.4 L987.9 177.9 L990.9 177.5 L993.9 177.0 L996.9 176.6 L999.9 176.2 L1002.9 175.8 L1005.9 175.4 L1008.9 175.1 L1011.9 174.7 L1014.9 174.4 L1017.9 174.1 L1020.9 173.8 L1024.0 173.5 L1027.0 173.2 Z" fill="#6fdcb0"/>
<path d="M800.0 230.7 L797.1 231.8 L794.3 232.8 L791.5 233.9 L788.6 234.9 L785.8 236.0 L783.0 237.0 L780.1 238.1 L777.3 239.1 L774.5 240.2 L771.7 241.3 L768.8 242.3 L766.0 243.4 L763.2 244.5 L760.4 245.5 L757.6 246.6 L754.7 247.7 L751.9 248.8 L749.1 249.9 L746.3 251.0 L743.5 252.1 L740.7 253.2 L737.9 254.3 L735.1 255.4 L732.3 256.5 L729.5 257.6 L726.7 258.7 L723.9 259.9 L721.1 261.0 L718.3 262.1 L715.5 263.3 L712.7 264.4 L709.9 265.6 L707.1 266.7 L704.3 267.9 L701.6 269.0 L698.8 270.2 L696.0 271.3 L693.3 272.5 L690.5 273.7 L687.7 274.9 L685.0 276.0 L682.2 277.2 L679.5 278.4 L676.7 279.6 L674.0 280.8 L671.2 282.0 L668.5 283.2 L665.7 284.5 L663.0 285.7 L660.3 286.9 L657.5 288.2 L654.8 289.4 L652.1 290.7 L649.4 291.9 L646.6 293.2 L643.9 294.5 L641.2 295.7 L638.5 297.0 L635.8 298.3 L633.1 299.6 L630.4 301.0 L627.7 302.3 L625.0 303.6 L622.3 304.9 L619.6 306.3 L616.9 307.6 L614.2 309.0 L611.6 310.4 L608.9 311.8 L606.2 313.2 L603.5 314.6 L600.9 316.0 L598.2 317.4 L595.5 318.9 L592.9 320.3 L590.2 321.8 L587.5 323.2 L584.9 324.7 L582.2 326.2 L579.6 327.7 L576.9 329.2 L575 345 L630.6 343.9 L630.3 341.2 L630.2 338.4 L630.5 335.7 L631.1 333.0 L631.9 330.2 L632.9 327.5 L634.2 324.8 L635.6 322.2 L637.3 319.6 L639.0 317.1 L640.8 314.7 L642.7 312.4 L644.8 310.1 L646.8 307.9 L649.0 305.8 L651.3 303.8 L653.6 301.9 L655.9 300.0 L658.3 298.1 L660.8 296.4 L663.3 294.6 L665.9 293.0 L668.5 291.3 L671.2 289.8 L673.8 288.2 L676.5 286.7 L679.2 285.3 L682.0 283.8 L684.7 282.4 L687.4 281.0 L690.2 279.7 L692.9 278.3 L695.7 277.0 L698.4 275.7 L701.2 274.4 L703.9 273.1 L706.6 271.8 L709.4 270.5 L712.1 269.3 L714.8 268.0 L717.6 266.8 L720.3 265.5 L723.0 264.3 L725.8 263.1 L728.5 261.9 L731.2 260.7 L734.0 259.5 L736.7 258.3 L739.5 257.1 L742.2 256.0 L744.9 254.8 L747.7 253.6 L750.4 252.4 L753.2 251.3 L755.9 250.1 L758.7 248.9 L761.5 247.7 L764.2 246.6 L767.0 245.4 L769.8 244.2 L772.6 243.0 L775.3 241.9 L778.1 240.7 L780.9 239.5 L783.7 238.3 L786.5 237.1 L789.3 235.9 L792.2 234.6 L795.0 233.4 Z" fill="url(#gv)"/>
<path d="M1027.0 173.2 L1024.0 173.5 L1020.9 173.8 L1017.9 174.1 L1014.9 174.4 L1011.9 174.7 L1008.9 175.1 L1005.9 175.4 L1002.9 175.8 L999.9 176.2 L996.9 176.6 L993.9 177.0 L990.9 177.5 L987.9 177.9 L984.9 178.4 L981.9 178.9 L979.0 179.4 L976.0 179.9 L973.0 180.4 L970.1 181.0 L967.1 181.5 L964.2 182.1 L961.2 182.7 L958.3 183.3 L955.3 183.9 L952.4 184.5 L949.4 185.1 L946.5 185.8 L943.6 186.4 L940.6 187.1 L937.7 187.8 L934.8 188.5 L931.9 189.2 L929.0 189.9 L926.0 190.6 L923.1 191.3 L920.2 192.1 L917.3 192.8 L914.4 193.6 L911.5 194.4 L908.6 195.2 L905.7 196.0 L902.8 196.8 L899.9 197.6 L897.1 198.4 L894.2 199.3 L891.3 200.1 L888.4 201.0 L885.5 201.8 L882.7 202.7 L879.8 203.6 L876.9 204.4 L874.0 205.3 L871.2 206.2 L868.3 207.2 L865.4 208.1 L862.6 209.0 L859.7 209.9 L856.9 210.9 L854.0 211.8 L851.1 212.7 L848.3 213.7 L845.4 214.7 L842.6 215.6 L839.7 216.6 L836.9 217.6 L834.0 218.6 L831.2 219.6 L828.3 220.6 L825.5 221.6 L822.7 222.6 L819.8 223.6 L817.0 224.6 L814.1 225.6 L811.3 226.6 L808.5 227.6 L805.6 228.7 L802.8 229.7 L800.0 230.7 L797.1 231.8 L792.2 234.6 L789.3 235.9 L786.5 237.1 L783.7 238.3 L780.9 239.5 L778.1 240.7 L775.3 241.9 L772.6 243.0 L769.8 244.2 L767.0 245.4 L764.2 246.6 L761.5 247.7 L758.7 248.9 L755.9 250.1 L753.2 251.3 L750.4 252.4 L747.7 253.6 L744.9 254.8 L742.2 256.0 L739.5 257.1 L736.7 258.3 L734.0 259.5 L731.2 260.7 L728.5 261.9 L725.8 263.1 L723.0 264.3 L720.3 265.5 L717.6 266.8 L714.8 268.0 L712.1 269.3 L709.4 270.5 L706.6 271.8 L703.9 273.1 L701.2 274.4 L698.4 275.7 L695.7 277.0 L692.9 278.3 L690.2 279.7 L687.4 281.0 L684.7 282.4 L682.0 283.8 L679.2 285.3 L676.5 286.7 L673.8 288.2 L671.2 289.8 L668.5 291.3 L665.9 293.0 L663.3 294.6 L660.8 296.4 L658.3 298.1 L655.9 300.0 L653.6 301.9 L651.3 303.8 L649.0 305.8 L646.8 307.9 L644.8 310.1 L642.7 312.4 L640.8 314.7 L639.0 317.1 L637.3 319.6 L635.6 322.2 L634.2 324.8 L632.9 327.5 L631.9 330.2 L631.1 333.0 L630.5 335.7 L630.2 338.4 L630.3 341.2 L630.6 343.9 L631.3 346.5 L632.4 349.2 L633.7 351.7 L635.2 354.3 L637.0 356.7 L639.0 359.1 L641.1 361.5 L643.4 363.8 L645.8 366.0 L648.2 368.1 L650.6 370.1 L653.1 372.1 L655.6 373.9 L658.2 375.7 L660.7 377.5 L663.3 379.1 L665.9 380.7 L668.6 382.3 L671.2 383.8 L673.9 385.2 L676.6 386.6 L679.3 387.9 L682.0 389.2 L684.7 390.5 L687.4 391.7 L690.2 392.9 L692.9 394.1 L695.7 395.3 L698.5 396.4 L701.3 397.6 L704.0 398.7 L706.8 399.8 L709.6 400.9 L712.4 402.0 L715.2 403.1 L718.0 404.2 L720.9 405.2 L723.7 406.3 L726.5 407.3 L729.3 408.4 L732.2 409.4 L735.0 410.4 L737.9 411.4 L740.7 412.4 L743.6 413.4 L746.4 414.3 L749.3 415.3 L752.2 416.3 L755.0 417.2 L757.9 418.1 L760.8 419.1 L763.6 420.0 L766.5 420.9 L769.4 421.8 L772.3 422.7 L775.2 423.6 L778.1 424.5 L781.0 425.3 L783.9 426.2 L786.8 427.0 L789.7 427.9 L792.6 428.7 L795.5 429.5 L798.4 430.4 L801.3 431.2 L804.2 432.0 L807.1 432.8 L810.1 433.5 L813.0 434.3 L815.9 435.1 L818.8 435.8 L821.8 436.6 L824.7 437.3 L827.6 438.1 L830.6 438.8 L833.5 439.5 L836.4 440.2 L839.4 440.9 L842.3 441.6 L845.3 442.2 L848.2 442.9 L851.1 443.6 L854.1 444.2 L857.0 444.8 L860.0 445.5 L863.0 446.1 L865.9 446.7 L868.9 447.3 L871.8 447.9 L874.8 448.4 L877.7 449.0 L880.7 449.6 L883.7 450.1 L886.6 450.7 L889.6 451.2 L892.6 451.7 L895.6 452.2 L898.5 452.7 L901.5 453.2 L925.5 453.2 L1027.0 442.5 Z" fill="#6fdcb0"/>
<path d="M1027.0 156.2 L1024.0 156.5 L1021.0 156.8 L1018.0 157.2 L1015.0 157.5 L1012.0 157.9 L1009.0 158.2 L1006.0 158.6 L1003.0 159.0 L1000.0 159.4 L997.0 159.8 L994.0 160.2 L991.0 160.6 L988.0 161.0 L985.0 161.5 L982.0 161.9 L979.1 162.4 L976.1 162.8 L973.1 163.3 L970.1 163.8 L967.2 164.3 L964.2 164.8 L961.2 165.3 L958.3 165.8 L955.3 166.3 L952.3 166.8 L949.4 167.4 L946.4 167.9 L943.5 168.5 L940.5 169.1 L937.6 169.6 L934.6 170.2 L931.7 170.8 L928.7 171.4 L925.8 172.0 L922.8 172.6 L919.9 173.3 L916.9 173.9 L914.0 174.5 L911.1 175.2 L908.1 175.8 L905.2 176.5 L902.3 177.2 L899.3 177.9 L896.4 178.5 L893.5 179.2 L890.6 179.9 L887.6 180.6 L884.7 181.4 L881.8 182.1 L878.9 182.8 L876.0 183.5 L873.1 184.3 L870.2 185.0 L867.2 185.8 L864.3 186.6 L861.4 187.3 L858.5 188.1 L855.6 188.9 L852.7 189.7 L849.8 190.5 L846.9 191.3 L844.0 192.1 L841.1 192.9 L838.3 193.7 L835.4 194.6 L832.5 195.4 L829.6 196.2 L826.7 197.1 L823.8 197.9 L820.9 198.8 L818.1 199.7 L815.2 200.5 L812.3 201.4 L809.4 202.3 L806.5 203.2 L803.7 204.1 L800.8 205.0 L797.9 205.9 L795.1 206.8 L792.2 207.7 L789.3 208.7 L786.5 209.6 L783.6 210.5 L780.7 211.5 L777.9 212.4 L775.0 213.4 L772.2 214.3 L769.3 215.3 L766.5 216.2 L763.6 217.2 L760.8 218.2 L757.9 219.2 L755.1 220.2 L752.2 221.1 L749.4 222.1 L746.5 223.1 L743.7 224.1 L740.9 225.1 L738.0 226.2 L735.2 227.2 L732.3 228.2 L729.5 229.2 L726.7 230.3 L723.8 231.3 L721.0 232.3 L718.2 233.4 L715.3 234.4 L712.5 235.5 L709.7 236.5 L706.9 237.6 L704.0 238.6 L701.2 239.7 L698.4 240.8 L695.6 241.8 L692.8 242.9 L689.9 244.0 L687.1 245.1 L684.3 246.2 L681.5 247.3 L678.7 248.3 L675.9 249.4 L673.1 250.5 L670.3 251.6 L667.4 252.8 L664.6 253.9 L661.8 255.0 L659.0 256.1 L656.2 257.2 L653.4 258.3 L650.6 259.5 L647.8 260.6 L645.1 261.7 L642.3 262.9 L639.5 264.0 L636.7 265.2 L633.9 266.4 L631.1 267.5 L628.4 268.7 L625.6 269.9 L622.8 271.0 L620.0 272.2 L617.3 273.4 L614.5 274.6 L611.8 275.8 L609.0 277.0 L606.3 278.2 L603.5 279.4 L600.8 280.7 L598.0 281.9 L595.3 283.1 L592.6 284.4 L589.8 285.6 L587.1 286.9 L584.4 288.2 L581.7 289.4 L579.0 290.7 L576.3 292.0 L573.6 293.3 L570.9 294.6 L568.2 295.9 L565.5 297.2 L562.9 298.6 L560.2 299.9 L557.5 301.3 L554.9 302.6 L552.2 304.0 L549.6 305.4 L546.9 306.8 L544.3 308.2 L541.7 309.6 L539.1 311.1 L536.4 312.5 L533.8 314.0 L531.2 315.5 L528.6 317.1 L526.0 318.6 L523.5 320.2 L520.9 321.8 L518.3 323.4 L515.8 325.1 L513.2 326.7 L510.7 328.4 L508.1 330.2 L505.6 331.9 L503.1 333.7 L500.6 335.5 L498.1 337.4 L495.6 339.3 L493.1 341.2 L490.8 343.2 L488.4 345.3 L486.2 347.4 L484.0 349.5 L481.9 351.7 L479.9 353.9 L478.0 356.3 L476.2 358.7 L474.6 361.1 L473.1 363.7 L471.7 366.3 L470.6 369.0 L469.6 371.8 L468.7 374.6 L468.1 377.5 L467.6 380.4 L467.3 383.3 L467.2 386.2 L467.3 389.2 L467.7 392.1 L468.2 394.9 L469.0 397.8 L470.0 400.5 L471.2 403.3 L472.6 405.9 L474.2 408.5 L475.9 410.9 L477.8 413.4 L479.8 415.7 L481.8 418.0 L483.9 420.1 L486.1 422.3 L488.3 424.3 L490.6 426.3 L492.9 428.2 L495.3 430.0 L497.7 431.9 L500.2 433.6 L502.7 435.3 L505.2 437.0 L507.8 438.6 L510.4 440.2 L513.0 441.8 L515.6 443.3 L518.2 444.8 L520.9 446.3 L523.6 447.7 L526.2 449.2 L528.9 450.6 L531.6 452.0 L534.2 453.5 L536.9 454.8 L539.6 456.2 L542.3 457.6 L545.0 458.9 L547.7 460.3 L550.4 461.6 L553.2 462.9 L555.9 464.2 L558.6 465.5 L561.4 466.8 L564.1 468.0 L566.8 469.3 L569.6 470.5 L572.3 471.7 L575.1 472.9 L577.8 474.1 L580.6 475.3 L583.4 476.5 L586.2 477.6 L588.9 478.8 L591.7 479.9 L594.5 481.0 L597.3 482.1 L600.1 483.3 L602.9 484.3 L605.7 485.4 L608.5 486.5 L611.3 487.6 L614.1 488.6 L616.9 489.7 L619.8 490.7 L622.6 491.7 L625.4 492.7 L628.2 493.7 L631.1 494.7 L633.9 495.7 L636.8 496.7 L639.6 497.7 L642.4 498.6 L645.3 499.6 L648.1 500.5 L651.0 501.5 L653.9 502.4 L656.7 503.3 L659.6 504.2 L662.5 505.2 L665.3 506.1 L668.2 506.9 L671.1 507.8 L673.9 508.7 L676.8 509.6 L679.7 510.5 L682.6 511.3 L685.5 512.2 L688.4 513.0 L691.3 513.9 L694.2 514.7 L697.1 515.5 L700.0 516.3 L702.9 517.1 L705.8 518.0 L708.7 518.7 L711.6 519.5 L714.5 520.3 L717.4 521.1 L720.3 521.9 L723.2 522.6 L726.1 523.4 L729.1 524.1 L732.0 524.8 L734.9 525.6 L737.8 526.3 L740.8 527.0 L743.7 527.7 L746.6 528.4 L749.5 529.1 L752.5 529.7 L755.4 530.4 L758.4 531.0 L761.3 531.7 L764.2 532.3 L767.2 533.0 L770.1 533.6 L773.1 534.2 L776.0 534.8 L779.0 535.4 L781.9 535.9 L784.9 536.5 L787.9 537.1 L790.8 537.6 L793.8 538.2 L796.7 538.7 L799.7 539.2 L802.7 539.7 L805.6 540.2 L808.6 540.7 L811.6 541.2 L814.5 541.6 L817.5 542.1 L820.5 542.5 L823.5 543.0 L826.5 543.4 L829.4 543.8 L832.4 544.2 L835.4 544.6 L838.4 544.9 L841.4 545.3 L844.4 545.7 L847.3 546.0 L850.3 546.3 L853.3 546.6 L856.3 546.9 L859.3 547.2 L862.3 547.5 L865.3 547.8 L868.3 548.0 L871.3 548.3 L874.3 548.5 L877.3 548.7 L949.6 548.7 L1027.0 542.1" fill="none" stroke="#2356d6" stroke-width="1.35"/>
<path d="M561.4 338.9 L558.9 340.6 L556.4 342.4 L554.0 344.2 L551.7 346.2 L549.3 348.1 L547.1 350.2 L544.9 352.3 L542.8 354.5 L540.8 356.8 L538.8 359.2 L537.0 361.7 L535.2 364.2 L533.6 366.8 L532.2 369.4 L531.0 372.1 L529.9 374.8 L529.0 377.6 L528.4 380.3 L528.0 383.1 L527.9 385.9 L528.0 388.7 L528.4 391.5 L529.0 394.2 L529.8 396.9 L530.9 399.6 L532.1 402.3 L533.6 404.9 L535.2 407.4 L537.0 409.8 L538.9 412.2 L540.9 414.5 L543.1 416.6 L545.4 418.7 L547.8 420.8 L550.2 422.7 L552.8 424.6 L555.3 426.4 L557.9 428.2 L560.5 429.9 L563.1 431.6 L565.7 433.2 L568.3 434.8 L570.9 436.3 L573.5 437.8 L576.2 439.3 L578.8 440.7 L581.5 442.1 L584.2 443.5 L586.8 444.9 L589.5 446.2 L592.2 447.5 L594.9 448.8 L597.6 450.1 L600.3 451.4 L603.0 452.6 L605.7 453.9 L608.5 455.1 L611.2 456.3 L613.9 457.6 L616.7 458.8 L619.4 460.0 L622.2 461.2 L624.9 462.4 L627.7 463.6 L630.4 464.8 L633.2 465.9 L636.0 467.1 L638.8 468.3 L641.5 469.4 L644.3 470.6 L647.1 471.7 L649.9 472.8 L652.7 473.9 L655.5 475.0 L658.3 476.2 L661.1 477.2 L663.9 478.3 L666.8 479.4 L669.6 480.5 L672.4 481.5 L675.2 482.6 L678.1 483.6 L680.9 484.6 L683.7 485.7 L686.6 486.7 L689.4 487.7 L692.3 488.7 L695.1 489.7 L698.0 490.6 L700.8 491.6 L703.7 492.6 L706.6 493.5 L709.4 494.4 L712.3 495.4 L715.2 496.3 L718.0 497.2 L720.9 498.1 L723.8 499.0 L726.7 499.8 L729.6 500.7 L732.5 501.5 L735.4 502.4 L738.2 503.2 L741.1 504.1 L744.0 504.9 L746.9 505.7 L749.8 506.5 L752.8 507.2 L755.7 508.0 L758.6 508.8 L761.5 509.5 L764.4 510.3 L767.3 511.0 L770.3 511.7 L773.2 512.4 L776.1 513.1 L779.0 513.8 L782.0 514.5 L784.9 515.2 L787.8 515.8 L790.8 516.5 L793.7 517.1 L796.7 517.7 L799.6 518.3 L802.6 518.9 L805.5 519.5 L808.5 520.1 L811.4 520.7 L814.4 521.2 L817.3 521.8 L820.3 522.3 L823.3 522.8 L826.2 523.3 L829.2 523.8 L832.2 524.3 L835.1 524.8 L838.1 525.2 L841.1 525.7 L844.1 526.1 L847.1 526.6 L850.0 527.0 L853.0 527.4 L856.0 527.8 L859.0 528.2 L862.0 528.6 L865.0 528.9 L868.0 529.3 L871.0 529.6 L874.0 529.9 L877.0 530.2 L880.0 530.5 L883.0 530.8 L886.0 531.1 L940.9 531.1 L1027.0 523.1" fill="none" stroke="#2356d6" stroke-width="1.35"/>
<path d="M698.8 270.2 L696.0 271.3 L693.3 272.5 L690.5 273.7 L687.7 274.9 L685.0 276.0 L682.2 277.2 L679.5 278.4 L676.7 279.6 L674.0 280.8 L671.2 282.0 L668.5 283.2 L665.7 284.5 L663.0 285.7 L660.3 286.9 L657.5 288.2 L654.8 289.4 L652.1 290.7 L649.4 291.9 L646.6 293.2 L643.9 294.5 L641.2 295.7 L638.5 297.0 L635.8 298.3 L633.1 299.6 L630.4 301.0 L627.7 302.3 L625.0 303.6 L622.3 304.9 L619.6 306.3 L616.9 307.6 L614.2 309.0 L611.6 310.4 L608.9 311.8 L606.2 313.2 L603.5 314.6 L600.9 316.0 L598.2 317.4 L595.5 318.9 L592.9 320.3 L590.2 321.8 L587.5 323.2 L584.9 324.7 L582.2 326.2 L579.6 327.7 L576.9 329.2 L574.3 330.8 L571.7 332.3 L569.1 333.9 L566.5 335.5 L563.9 337.2 L561.4 338.9" fill="none" stroke="#d4f4e8" stroke-width="1"/>
<path d="M657.5 288.2 L660.3 286.9 L663.0 285.7 L665.7 284.5 L668.5 283.2 L671.2 282.0 L674.0 280.8 L676.7 279.6 L679.5 278.4 L682.2 277.2 L685.0 276.0 L687.7 274.9 L690.5 273.7 L693.3 272.5 L696.0 271.3 L698.8 270.2 L701.6 269.0 L704.3 267.9 L707.1 266.7 L709.9 265.6 L712.7 264.4 L715.5 263.3 L718.3 262.1 L721.1 261.0 L723.9 259.9 L726.7 258.7 L729.5 257.6 L732.3 256.5 L735.1 255.4 L737.9 254.3 L740.7 253.2 L743.5 252.1 L746.3 251.0 L749.1 249.9 L751.9 248.8 L754.7 247.7 L757.6 246.6 L760.4 245.5 L763.2 244.5 L766.0 243.4 L768.8 242.3 L771.7 241.3 L774.5 240.2 L777.3 239.1 L780.1 238.1 L783.0 237.0 L785.8 236.0 L788.6 234.9 L791.5 233.9 L794.3 232.8 L797.1 231.8 L800.0 230.7 L802.8 229.7 L805.6 228.7 L808.5 227.6 L811.3 226.6 L814.1 225.6 L817.0 224.6 L819.8 223.6 L822.7 222.6 L825.5 221.6 L828.3 220.6 L831.2 219.6 L834.0 218.6 L836.9 217.6 L839.7 216.6 L842.6 215.6 L845.4 214.7 L848.3 213.7 L851.1 212.7 L854.0 211.8 L856.9 210.9 L859.7 209.9 L862.6 209.0 L865.4 208.1 L868.3 207.2 L871.2 206.2 L874.0 205.3 L876.9 204.4 L879.8 203.6 L882.7 202.7 L885.5 201.8 L888.4 201.0 L891.3 200.1 L894.2 199.3 L897.1 198.4 L899.9 197.6 L902.8 196.8 L905.7 196.0 L908.6 195.2 L911.5 194.4 L914.4 193.6 L917.3 192.8 L920.2 192.1 L923.1 191.3 L926.0 190.6 L929.0 189.9 L931.9 189.2 L934.8 188.5 L937.7 187.8 L940.6 187.1 L943.6 186.4 L946.5 185.8 L949.4 185.1 L952.4 184.5 L955.3 183.9 L958.3 183.3 L961.2 182.7 L964.2 182.1 L967.1 181.5 L970.1 181.0 L973.0 180.4 L976.0 179.9 L979.0 179.4 L981.9 178.9 L984.9 178.4 L987.9 177.9 L990.9 177.5 L993.9 177.0 L996.9 176.6 L999.9 176.2 L1002.9 175.8 L1005.9 175.4 L1008.9 175.1 L1011.9 174.7 L1014.9 174.4 L1017.9 174.1 L1020.9 173.8 L1024.0 173.5 L1027.0 173.2" fill="none" stroke="#2356d6" stroke-width="1.35" stroke-dasharray="1.5 3 2 2.5 3 2 3 1.5 5 1.5 7 1 600"/>
<path d="M795.0 233.4 L792.2 234.6 L789.3 235.9 L786.5 237.1 L783.7 238.3 L780.9 239.5 L778.1 240.7 L775.3 241.9 L772.6 243.0 L769.8 244.2 L767.0 245.4 L764.2 246.6 L761.5 247.7 L758.7 248.9 L755.9 250.1 L753.2 251.3 L750.4 252.4 L747.7 253.6 L744.9 254.8 L742.2 256.0 L739.5 257.1 L736.7 258.3 L734.0 259.5 L731.2 260.7 L728.5 261.9 L725.8 263.1 L723.0 264.3 L720.3 265.5 L717.6 266.8 L714.8 268.0 L712.1 269.3 L709.4 270.5 L706.6 271.8 L703.9 273.1 L701.2 274.4 L698.4 275.7 L695.7 277.0 L692.9 278.3 L690.2 279.7 L687.4 281.0 L684.7 282.4 L682.0 283.8 L679.2 285.3 L676.5 286.7 L673.8 288.2 L671.2 289.8 L668.5 291.3 L665.9 293.0 L663.3 294.6 L660.8 296.4 L658.3 298.1 L655.9 300.0 L653.6 301.9 L651.3 303.8 L649.0 305.8 L646.8 307.9 L644.8 310.1 L642.7 312.4 L640.8 314.7 L639.0 317.1 L637.3 319.6 L635.6 322.2 L634.2 324.8 L632.9 327.5 L631.9 330.2 L631.1 333.0 L630.5 335.7 L630.2 338.4 L630.3 341.2 L630.6 343.9 L631.3 346.5 L632.4 349.2 L633.7 351.7 L635.2 354.3 L637.0 356.7 L639.0 359.1 L641.1 361.5 L643.4 363.8 L645.8 366.0 L648.2 368.1 L650.6 370.1 L653.1 372.1 L655.6 373.9 L658.2 375.7 L660.7 377.5 L663.3 379.1 L665.9 380.7 L668.6 382.3 L671.2 383.8 L673.9 385.2 L676.6 386.6 L679.3 387.9 L682.0 389.2 L684.7 390.5 L687.4 391.7 L690.2 392.9 L692.9 394.1 L695.7 395.3 L698.5 396.4 L701.3 397.6 L704.0 398.7 L706.8 399.8 L709.6 400.9 L712.4 402.0 L715.2 403.1 L718.0 404.2 L720.9 405.2 L723.7 406.3 L726.5 407.3 L729.3 408.4 L732.2 409.4 L735.0 410.4 L737.9 411.4 L740.7 412.4 L743.6 413.4 L746.4 414.3 L749.3 415.3 L752.2 416.3 L755.0 417.2 L757.9 418.1 L760.8 419.1 L763.6 420.0 L766.5 420.9 L769.4 421.8 L772.3 422.7 L775.2 423.6 L778.1 424.5 L781.0 425.3 L783.9 426.2 L786.8 427.0 L789.7 427.9 L792.6 428.7 L795.5 429.5 L798.4 430.4 L801.3 431.2 L804.2 432.0 L807.1 432.8 L810.1 433.5 L813.0 434.3 L815.9 435.1 L818.8 435.8 L821.8 436.6 L824.7 437.3 L827.6 438.1 L830.6 438.8 L833.5 439.5 L836.4 440.2 L839.4 440.9 L842.3 441.6 L845.3 442.2 L848.2 442.9 L851.1 443.6 L854.1 444.2 L857.0 444.8 L860.0 445.5 L863.0 446.1 L865.9 446.7 L868.9 447.3 L871.8 447.9 L874.8 448.4 L877.7 449.0 L880.7 449.6 L883.7 450.1 L886.6 450.7 L889.6 451.2 L892.6 451.7 L895.6 452.2 L898.5 452.7 L901.5 453.2 L925.5 453.2 L1027.0 442.5" fill="none" stroke="#2356d6" stroke-width="1.35"/>
<path d="M368.0 422.5 L369.0 419.5 L370.2 416.6 L371.4 413.8 L372.7 411.0 L374.1 408.4 L375.6 405.7 L377.2 403.2 L378.8 400.7 L380.5 398.2 L382.3 395.9 L384.2 393.6 L386.1 391.3 L388.1 389.1 L390.2 386.9 L392.3 384.8 L394.5 382.7 L396.7 380.7 L398.9 378.7 L401.2 376.8 L403.6 374.9 L406.0 373.1 L408.4 371.2 L410.8 369.4 L413.3 367.7 L415.8 365.9 L418.4 364.2 L420.9 362.6 L423.5 360.9 L426.1 359.3 L428.7 357.7 L431.4 356.1 L434.0 354.5 L436.7 353.0 L439.4 351.5 L442.1 350.0 L444.8 348.5 L447.5 347.0 L450.2 345.5 L452.9 344.0 L455.6 342.6 L458.4 341.1 L461.1 339.7 L463.8 338.2 L466.5 336.8 L469.3 335.4 L472.0 334.0 L474.7 332.6 L477.4 331.2 L480.2 329.8 L482.9 328.4 L485.6 327.0 L488.4 325.7 L491.1 324.3 L493.9 323.0 L496.6 321.6 L499.3 320.3 L502.1 318.9 L504.8 317.6 L507.6 316.3 L510.3 315.0 L513.1 313.7 L515.9 312.4 L518.6 311.1 L521.4 309.8 L524.2 308.6 L526.9 307.3 L529.7 306.0 L532.5 304.8 L535.2 303.5 L538.0 302.3 L540.8 301.1 L543.6 299.9 L546.4 298.6 L549.2 297.4 L552.0 296.2 L554.8 295.0 L557.6 293.9 L560.4 292.7 L563.2 291.5 L566.0 290.3 L568.8 289.2 L571.6 288.0 L574.4 286.9 L577.2 285.7 L580.1 284.6 L582.9 283.5 L585.7 282.4 L588.6 281.3 L591.4 280.2 L594.2 279.1 L597.1 278.0 L599.9 276.9 L602.8 275.8 L605.6 274.7 L608.5 273.7 L611.4 272.6 L614.2 271.6 L617.1 270.5 L620.0 269.5 L622.9 268.5 L625.8 267.4 L628.7 266.4 L631.5 265.4 L634.4 264.4 L637.3 263.4 L640.3 262.4 L643.2 261.4 L646.1 260.5 L649.0 259.5" fill="none" stroke="#e2faee" stroke-width="1"/>
<path d="M368.0 406.3 L369.3 403.6 L370.7 401.0 L372.2 398.4 L373.7 395.8 L375.3 393.3 L376.9 390.8 L378.6 388.4 L380.4 386.0 L382.2 383.6 L384.1 381.3 L386.0 379.0 L387.9 376.7 L389.9 374.5 L392.0 372.3 L394.0 370.1 L396.2 368.0 L398.3 365.9 L400.5 363.8 L402.7 361.7 L404.9 359.7 L407.2 357.7 L409.5 355.7 L411.8 353.7 L414.1 351.7 L416.4 349.8 L418.8 347.9 L421.2 346.0 L423.6 344.1 L426.0 342.2 L428.4 340.4 L430.9 338.6 L433.3 336.8 L435.8 335.0 L438.3 333.2 L440.8 331.5 L443.3 329.7 L445.8 328.0 L448.3 326.3 L450.8 324.6 L453.4 323.0 L455.9 321.3 L458.4 319.7 L461.0 318.1 L463.6 316.5 L466.2 314.9 L468.7 313.4 L471.3 311.8 L473.9 310.3 L476.6 308.8 L479.2 307.3 L481.8 305.8 L484.4 304.4 L487.1 302.9 L489.7 301.5 L492.4 300.0 L495.0 298.6 L497.7 297.2 L500.4 295.9 L503.1 294.5 L505.7 293.1 L508.4 291.8 L511.1 290.5 L513.8 289.2 L516.5 287.9 L519.3 286.6 L522.0 285.3 L524.7 284.0 L527.4 282.8 L530.2 281.5 L532.9 280.3 L535.7 279.1 L538.4 277.9 L541.2 276.7 L544.0 275.5 L546.7 274.3 L549.5 273.1 L552.3 271.9 L555.1 270.8 L557.9 269.7 L560.6 268.5 L563.4 267.4 L566.2 266.3 L569.0 265.2 L571.8 264.1 L574.7 263.0 L577.5 261.9 L580.3 260.8 L583.1 259.7 L585.9 258.7 L588.7 257.6 L591.6 256.6 L594.4 255.5 L597.2 254.5 L600.1 253.4 L602.9 252.4 L605.8 251.4 L608.6 250.4 L611.4 249.4 L614.3 248.4 L617.1 247.3 L620.0 246.3 L622.8 245.4 L625.7 244.4 L628.5 243.4 L631.4 242.4 L634.2 241.4 L637.1 240.4 L640.0 239.5 L642.8 238.5 L645.7 237.5 L648.5 236.6 L651.4 235.6 L654.3 234.7 L657.1 233.7 L660.0 232.8 L662.9 231.8 L665.8 230.9 L668.6 229.9 L671.5 229.0 L674.4 228.1 L677.2 227.2 L680.1 226.2 L683.0 225.3 L685.9 224.4 L688.8 223.5 L691.6 222.6" fill="none" stroke="#ffffff" stroke-width="1.7"/>
<path d="M1027.0 621.7 L1024.0 622.1 L1021.0 622.4 L1018.0 622.8 L1014.9 623.1 L1011.9 623.4 L1008.9 623.7 L1005.9 624.0 L1002.9 624.3 L999.8 624.6 L996.8 624.8 L993.8 625.1 L990.8 625.3 L987.8 625.6 L984.8 625.8 L981.7 626.0 L978.7 626.2 L975.7 626.4 L972.7 626.6 L969.7 626.8 L966.6 626.9 L963.6 627.1 L960.6 627.2 L957.6 627.3 L954.6 627.5 L951.5 627.6 L948.5 627.7 L945.5 627.8 L942.5 627.8 L939.5 627.9 L936.4 628.0 L933.4 628.0 L930.4 628.1 L927.4 628.1 L924.4 628.1 L921.3 628.1 L918.3 628.1 L915.3 628.1 L912.3 628.1 L909.3 628.0 L906.2 628.0 L903.2 628.0 L900.2 627.9 L897.2 627.8 L894.2 627.7 L891.2 627.7 L888.2 627.6 L885.1 627.4 L882.1 627.3 L879.1 627.2 L876.1 627.1 L873.1 626.9 L870.1 626.8 L867.1 626.6 L864.0 626.4 L861.0 626.2 L858.0 626.1 L855.0 625.9 L852.0 625.6 L849.0 625.4 L846.0 625.2 L843.0 625.0 L840.0 624.7 L837.0 624.5 L834.0 624.2 L831.0 623.9 L828.0 623.6 L825.0 623.4 L821.9 623.1 L818.9 622.7 L815.9 622.4 L812.9 622.1 L809.9 621.8 L807.0 621.4 L804.0 621.1 L801.0 620.7 L798.0 620.3 L795.0 620.0 L792.0 619.6 L789.0 619.2 L786.0 618.8 L783.0 618.4 L780.0 618.0 L777.0 617.5 L774.0 617.1 L771.1 616.6 L768.1 616.2 L765.1 615.7 L762.1 615.3 L759.1 614.8 L756.1 614.3 L753.2 613.8 L750.2 613.3 L747.2 612.8 L744.2 612.3 L741.3 611.8 L738.3 611.2 L735.3 610.7 L732.3 610.1 L729.4 609.6 L726.4 609.0 L723.4 608.5 L720.5 607.9 L717.5 607.3 L714.6 606.7 L711.6 606.1 L708.6 605.5 L705.7 604.9 L702.7 604.2 L699.8 603.6 L696.8 603.0 L693.9 602.3 L690.9 601.7 L688.0 601.0 L685.0 600.3 L682.1 599.7 L679.1 599.0 L676.2 598.3 L673.3 597.6 L670.3 596.9 L667.4 596.2 L664.5 595.5 L661.5 594.7 L658.6 594.0 L655.7 593.3 L652.7 592.5 L649.8 591.8 L646.9 591.0 L644.0 590.2 L641.0 589.5 L638.1 588.7 L635.2 587.9 L632.3 587.1 L629.4 586.3 L626.5 585.5 L623.6 584.6 L620.6 583.8 L617.7 583.0 L614.8 582.1 L611.9 581.3 L609.0 580.4 L606.1 579.6 L603.2 578.7 L600.3 577.8 L597.5 576.9 L594.6 576.1 L591.7 575.2 L588.8 574.2 L585.9 573.3 L583.0 572.4 L580.1 571.5 L577.3 570.6 L574.4 569.6 L571.5 568.7 L568.6 567.7 L565.8 566.7 L562.9 565.8 L560.0 564.8 L557.2 563.8 L554.3 562.8 L551.4 561.8 L548.6 560.8 L545.7 559.8 L542.9 558.8 L540.0 557.8 L537.2 556.7 L534.3 555.7 L531.5 554.6 L528.6 553.6 L525.8 552.5 L523.0 551.5 L520.1 550.4 L517.3 549.3 L514.5 548.2 L511.6 547.1 L508.8 546.0 L506.0 544.9 L503.2 543.8 L500.3 542.7 L497.5 541.5 L494.7 540.4 L491.9 539.2 L489.1 538.1 L486.3 536.9 L483.5 535.7 L480.7 534.6 L477.9 533.4 L475.1 532.1 L472.4 530.9 L469.6 529.7 L466.9 528.4 L464.1 527.2 L461.4 525.9 L458.7 524.6 L456.0 523.2 L453.3 521.9 L450.6 520.5 L447.9 519.2 L445.2 517.8 L442.6 516.3 L440.0 514.9 L437.4 513.4 L434.8 511.9 L432.2 510.4 L429.6 508.9 L427.1 507.3 L424.6 505.7 L422.1 504.1 L419.6 502.4 L417.2 500.8 L414.7 499.1 L412.3 497.3 L409.9 495.6 L407.6 493.8 L405.2 491.9 L402.9 490.0 L400.6 488.1 L398.3 486.2 L396.1 484.2 L393.9 482.2 L391.7 480.2 L389.6 478.1 L387.5 476.0 L385.4 473.8 L383.3 471.6 L381.3 469.4 L379.3 467.1 L377.3 464.8 L375.4 462.4 L373.5 460.0 L371.6 457.5 L369.8 455.0 L368.0 452.5" fill="none" stroke="#ffffff" stroke-width="1.7"/>
<path d="M694.5 221.7 L697.4 220.8 L700.3 219.9 L703.2 219.0 L706.1 218.1 L709.0 217.3 L711.8 216.4 L714.7 215.5 L717.6 214.6 L720.5 213.8 L723.4 212.9 L726.3 212.1 L729.2 211.2 L732.1 210.4 L735.0 209.5 L737.9 208.7 L740.8 207.8 L743.7 207.0 L746.6 206.2 L749.5 205.4 L752.4 204.5 L755.3 203.7 L758.3 202.9 L761.2 202.1 L764.1 201.3 L767.0 200.5 L769.9 199.7 L772.8 198.9 L775.7 198.1 L778.6 197.3 L781.6 196.6 L784.5 195.8 L787.4 195.0 L790.3 194.2 L793.2 193.5 L796.2 192.7 L799.1 192.0 L802.0 191.2 L804.9 190.5 L807.9 189.7 L810.8 189.0 L813.7 188.3 L816.7 187.5 L819.6 186.8 L822.5 186.1 L825.5 185.4 L828.4 184.7 L831.3 184.0 L834.3 183.2 L837.2 182.5 L840.1 181.9 L843.1 181.2 L846.0 180.5 L849.0 179.8 L851.9 179.1 L854.8 178.4 L857.8 177.8 L860.7 177.1 L863.7 176.4 L866.6 175.8 L869.6 175.1 L872.5 174.5 L875.5 173.8 L878.4 173.2 L881.4 172.6 L884.3 171.9 L887.3 171.3 L890.2 170.7 L893.2 170.1 L896.1 169.5 L899.1 168.9 L902.0 168.3 L905.0 167.7 L908.0 167.1 L910.9 166.5 L913.9 165.9 L916.9 165.3 L919.8 164.7 L922.8 164.2 L925.7 163.6 L928.7 163.0 L931.7 162.5 L934.6 161.9 L937.6 161.4 L940.6 160.8 L943.5 160.3 L946.5 159.7 L949.5 159.2 L952.5 158.7 L955.4 158.2 L958.4 157.6 L961.4 157.1 L964.4 156.6 L967.3 156.1 L970.3 155.6 L973.3 155.1 L976.3 154.6 L979.2 154.1 L982.2 153.7 L985.2 153.2 L988.2 152.7 L991.2 152.2 L994.1 151.8 L997.1 151.3 L1000.1 150.9 L1003.1 150.4 L1006.1 150.0 L1009.1 149.5 L1012.1 149.1 L1015.0 148.7 L1018.0 148.2 L1021.0 147.8 L1024.0 147.4 L1027.0 147.0" fill="none" stroke="#f3ef66" stroke-width="1.3"/>
<path d="M693 221.6 L716.7 232.4" stroke="#d6e64c" stroke-width="1" fill="none"/>
</g>
</svg>
<div class="abs title"></div><div class="abs divider"></div>
<svg class="abs" style="left:3px;top:4px" width="4" height="10" viewBox="0 0 4 10"><g fill="#8a90a0"><rect x="0" y="0" width="1" height="1"/><rect x="2" y="0" width="1" height="1"/><rect x="0" y="2" width="1" height="1"/><rect x="2" y="2" width="1" height="1"/><rect x="0" y="4" width="1" height="1"/><rect x="2" y="4" width="1" height="1"/><rect x="0" y="6" width="1" height="1"/><rect x="2" y="6" width="1" height="1"/><rect x="0" y="8" width="1" height="1"/><rect x="2" y="8" width="1" height="1"/></g></svg>
<span class="t" style="left:10.50px;top:2px;letter-spacing:-0.720px;color:#e1e4e9">PIT MODELER</span>
<span class="t" style="left:372.00px;top:2px;letter-spacing:1.200px;color:#c6cbd3">[−]</span>
<span class="t" style="left:389.60px;top:2px;letter-spacing:-0.258px;color:#c6cbd3">[Custom View]</span>
<span class="t" style="left:465.90px;top:2px;letter-spacing:-0.283px;color:#c6cbd3">[Conceptual (Fast)]</span>
<div class="abs grp" style="top:32px;height:123px"></div>
<div class="abs lbl" style="left:7px;top:26px;width:47.0px;height:13px"></div>
<span class="t" style="left:9.00px;top:26px;letter-spacing:-0.429px;">0. Setup</span>
<span class="t" style="left:7.60px;top:63px;letter-spacing:0.175px;">Design Direction:</span>
<div class="abs combo" style="left:109px;top:60px;width:98px;height:21px"></div>
<div class="abs cbtn" style="left:190px;top:60px;width:17px;height:21px"></div>
<svg class="abs" style="left:196px;top:69.0px" width="5" height="3" viewBox="0 0 5 3"><path d="M0 0 L5 0 L2.5 3 Z" fill="#1c1c1c"/></svg>
<span class="t" style="left:111.60px;top:64px;letter-spacing:0.250px;">Bottom Up</span>
<span class="t" style="left:7.60px;top:95px;letter-spacing:0.055px;">Design Type:</span>
<div class="abs combo" style="left:109px;top:92px;width:98px;height:22px"></div>
<div class="abs cbtn" style="left:190px;top:92px;width:17px;height:22px"></div>
<svg class="abs" style="left:196px;top:101.5px" width="5" height="3" viewBox="0 0 5 3"><path d="M0 0 L5 0 L2.5 3 Z" fill="#1c1c1c"/></svg>
<span class="t" style="left:111.60px;top:97px;letter-spacing:0.267px;">Dump</span>
<span class="t" style="left:8.60px;top:129px;letter-spacing:-0.164px;">Current Elevation: 5.00</span>
<div class="abs btn" style="top:76px;height:23px"></div>
<span class="t" style="left:244.40px;top:81px;letter-spacing:-0.470px;">Select Base</span>
<div class="abs grp" style="top:168px;height:120px"></div>
<div class="abs lbl" style="left:7.6px;top:162px;width:47.4px;height:13px"></div>
<span class="t" style="left:8.60px;top:163px;letter-spacing:-0.267px;">1. Ramp</span>
<span class="t" style="left:16.40px;top:186px;letter-spacing:0.520px;">Width:</span>
<div class="abs spin" style="left:82px;top:183px;width:99px;height:22px"></div>
<div class="abs sbtn" style="left:165px;top:185px;width:14px;height:9px"></div>
<div class="abs sbtn" style="left:165px;top:195px;width:14px;height:9px"></div>
<svg class="abs" style="left:169.5px;top:187.5px" width="5" height="3" viewBox="0 0 5 3"><path d="M0 3 L5 3 L2.5 0 Z" fill="#1c1c1c"/></svg>
<svg class="abs" style="left:169.5px;top:197.5px" width="5" height="3" viewBox="0 0 5 3"><path d="M0 0 L5 0 L2.5 3 Z" fill="#1c1c1c"/></svg>
<span class="t" style="left:113.50px;top:186px;letter-spacing:-0.700px;">5.00</span>
<div class="abs btn" style="top:182px;height:23px"></div>
<span class="t" style="left:235.60px;top:187px;letter-spacing:0.127px;">Aligned Ramp</span>
<span class="t" style="left:16.40px;top:214px;letter-spacing:0.000px;">Gradient:</span>
<div class="abs spin" style="left:82px;top:211px;width:57px;height:22px"></div>
<div class="abs sbtn" style="left:123px;top:213px;width:14px;height:9px"></div>
<div class="abs sbtn" style="left:123px;top:223px;width:14px;height:9px"></div>
<svg class="abs" style="left:127.5px;top:215.5px" width="5" height="3" viewBox="0 0 5 3"><path d="M0 3 L5 3 L2.5 0 Z" fill="#1c1c1c"/></svg>
<svg class="abs" style="left:127.5px;top:225.5px" width="5" height="3" viewBox="0 0 5 3"><path d="M0 0 L5 0 L2.5 3 Z" fill="#1c1c1c"/></svg>
<span class="t" style="left:94.60px;top:214px;letter-spacing:-1.100px;">8.0</span>
<div class="abs pc" style="left:143px;top:211px;width:38px;height:22px"></div>
<span class="t" style="left:147.00px;top:216px;letter-spacing:-2.000px;">%</span>
<svg class="abs" style="left:169px;top:220px" width="8" height="5" viewBox="0 0 8 5"><path d="M0.6 0.4 L4 3.9 L7.4 0.4" fill="none" stroke="#4a4a4a" stroke-width="1.1"/></svg>
<span class="t" style="left:220.00px;top:214px;letter-spacing:0.000px;">Tapper Distance:</span>
<span class="t" style="left:15.40px;top:240px;letter-spacing:0.533px;">Height:</span>
<div class="abs spin" style="left:82px;top:237px;width:99px;height:22px"></div>
<div class="abs sbtn" style="left:165px;top:239px;width:14px;height:9px"></div>
<div class="abs sbtn" style="left:165px;top:249px;width:14px;height:9px"></div>
<svg class="abs" style="left:169.5px;top:241.5px" width="5" height="3" viewBox="0 0 5 3"><path d="M0 3 L5 3 L2.5 0 Z" fill="#1c1c1c"/></svg>
<svg class="abs" style="left:169.5px;top:251.5px" width="5" height="3" viewBox="0 0 5 3"><path d="M0 0 L5 0 L2.5 3 Z" fill="#1c1c1c"/></svg>
<span class="t" style="left:116.50px;top:241px;letter-spacing:-1.100px;">5.0</span>
<div class="abs spin" style="left:217px;top:239px;width:98px;height:22px"></div>
<div class="abs sbtn" style="left:299px;top:241px;width:14px;height:9px"></div>
<div class="abs sbtn" style="left:299px;top:251px;width:14px;height:9px"></div>
<svg class="abs" style="left:303.5px;top:243.5px" width="5" height="3" viewBox="0 0 5 3"><path d="M0 3 L5 3 L2.5 0 Z" fill="#1c1c1c"/></svg>
<svg class="abs" style="left:303.5px;top:253.5px" width="5" height="3" viewBox="0 0 5 3"><path d="M0 0 L5 0 L2.5 3 Z" fill="#1c1c1c"/></svg>
<span class="t" style="left:244.00px;top:242px;letter-spacing:-0.500px;">100.0</span>
<div class="abs chk" style="left:14px;top:267px;background:#0f5bc2"></div>
<svg class="abs" style="left:14px;top:267px" width="13" height="13" viewBox="0 0 13 13"><path d="M3.1 6.7 L5.5 8.9 L9.6 4.6" fill="none" stroke="#fff" stroke-width="1.1"/></svg>
<span class="t" style="left:30.60px;top:266px;letter-spacing:-0.325px;">Clockwise</span>
<div class="abs grp" style="top:301px;height:55px"></div>
<div class="abs lbl" style="left:7.199999999999999px;top:295px;width:39.8px;height:13px"></div>
<span class="t" style="left:9.20px;top:295px;letter-spacing:-0.867px;">2. Face</span>
<span class="t" style="left:16.40px;top:325px;letter-spacing:0.000px;">Gradient:</span>
<div class="abs spin" style="left:82px;top:322px;width:57px;height:22px"></div>
<div class="abs sbtn" style="left:123px;top:324px;width:14px;height:9px"></div>
<div class="abs sbtn" style="left:123px;top:334px;width:14px;height:9px"></div>
<svg class="abs" style="left:127.5px;top:326.5px" width="5" height="3" viewBox="0 0 5 3"><path d="M0 3 L5 3 L2.5 0 Z" fill="#1c1c1c"/></svg>
<svg class="abs" style="left:127.5px;top:336.5px" width="5" height="3" viewBox="0 0 5 3"><path d="M0 0 L5 0 L2.5 3 Z" fill="#1c1c1c"/></svg>
<span class="t" style="left:88.60px;top:326px;letter-spacing:-0.650px;">50.00</span>
<div class="abs pc" style="left:143px;top:324px;width:38px;height:22px"></div>
<span class="t" style="left:147.00px;top:329px;letter-spacing:-2.000px;">%</span>
<svg class="abs" style="left:169px;top:333px" width="8" height="5" viewBox="0 0 8 5"><path d="M0.6 0.4 L4 3.9 L7.4 0.4" fill="none" stroke="#4a4a4a" stroke-width="1.1"/></svg>
<div class="abs btn" style="top:319px;height:23px"></div>
<span class="t" style="left:242.60px;top:324px;letter-spacing:-0.460px;">Create Face</span>
<div class="abs grp" style="top:370px;height:55px"></div>
<div class="abs lbl" style="left:7.6px;top:364px;width:44.0px;height:13px"></div>
<span class="t" style="left:9.60px;top:364px;letter-spacing:-0.500px;">3. Berm</span>
<span class="t" style="left:16.40px;top:394px;letter-spacing:0.520px;">Width:</span>
<div class="abs spin" style="left:82px;top:391px;width:99px;height:22px"></div>
<div class="abs sbtn" style="left:165px;top:393px;width:14px;height:9px"></div>
<div class="abs sbtn" style="left:165px;top:403px;width:14px;height:9px"></div>
<svg class="abs" style="left:169.5px;top:395.5px" width="5" height="3" viewBox="0 0 5 3"><path d="M0 3 L5 3 L2.5 0 Z" fill="#1c1c1c"/></svg>
<svg class="abs" style="left:169.5px;top:405.5px" width="5" height="3" viewBox="0 0 5 3"><path d="M0 0 L5 0 L2.5 3 Z" fill="#1c1c1c"/></svg>
<span class="t" style="left:113.60px;top:395px;letter-spacing:-0.667px;">6.00</span>
<div class="abs btn" style="top:389px;height:23px"></div>
<span class="t" style="left:241.00px;top:393px;letter-spacing:-0.260px;">Create Berm</span>
<div class="abs grp" style="top:439px;height:139px"></div>
<div class="abs lbl" style="left:7.199999999999999px;top:433px;width:98.3px;height:13px"></div>
<span class="t" style="left:9.20px;top:433px;letter-spacing:-0.231px;">4. Croped Surface</span>
<div class="abs chk" style="left:14px;top:469px;background:#0f5bc2"></div>
<svg class="abs" style="left:14px;top:469px" width="13" height="13" viewBox="0 0 13 13"><path d="M3.1 6.7 L5.5 8.9 L9.6 4.6" fill="none" stroke="#fff" stroke-width="1.1"/></svg>
<span class="t" style="left:30.10px;top:469px;letter-spacing:-0.073px;">Uncroped Surface</span>
<div class="abs chk" style="left:155px;top:469px;background:#f4f4f4;border:1px solid #707070"></div>
<span class="t" style="left:172.40px;top:469px;letter-spacing:-0.143px;">Cropped Surface</span>
<span class="t" style="left:8.70px;top:549px;letter-spacing:0.230px;">Topography:</span>
<div class="abs combo" style="left:92px;top:545px;width:99px;height:23px"></div>
<div class="abs cbtn" style="left:174px;top:545px;width:17px;height:23px"></div>
<svg class="abs" style="left:180px;top:555.0px" width="5" height="3" viewBox="0 0 5 3"><path d="M0 0 L5 0 L2.5 3 Z" fill="#1c1c1c"/></svg>
<div class="abs" style="left:95.5px;top:545px;width:78.5px;height:23px;overflow:hidden"><span class="t" style="left:0.00px;top:5px;letter-spacing:-0.108px;">SurfacePitMod</span></div>
<div class="abs btn" style="top:545px;height:23px"></div>
<span class="t" style="left:226.60px;top:550px;letter-spacing:-0.187px;">Generate  Surface</span>
<svg class="abs" style="left:380px;top:700px" width="100" height="90" viewBox="380 700 100 90">
<path d="M393.9 759.6 L397.4 756.6 L408 769.5 L408 775 Z" fill="#13941b"/>
<path d="M409 775.2 L411.5 770.8 L456 767.6 L457 771.2 L418 775.4 Z" fill="#b5302c"/>
<rect x="405.8" y="726.6" width="5.2" height="47.6" fill="#2166c9"/>
<rect x="405.8" y="726.6" width="1.8" height="47.6" fill="#1a5bc0"/>
<path d="M405.8 711.3 L418.2 711.3 L405.8 723.9 L418.2 723.9" fill="none" stroke="#1e63d0" stroke-width="1"/>
<path d="M392.8 744.2 L398.5 750 L404.7 744.2 M398.5 750 L398.5 755.8" fill="none" stroke="#148a1c" stroke-width="1"/>
<path d="M452.2 753.8 L463.8 765.8 M463.8 753.8 L452.2 765.8" fill="none" stroke="#8c2f2c" stroke-width="1"/>
</svg>
</body></html>
